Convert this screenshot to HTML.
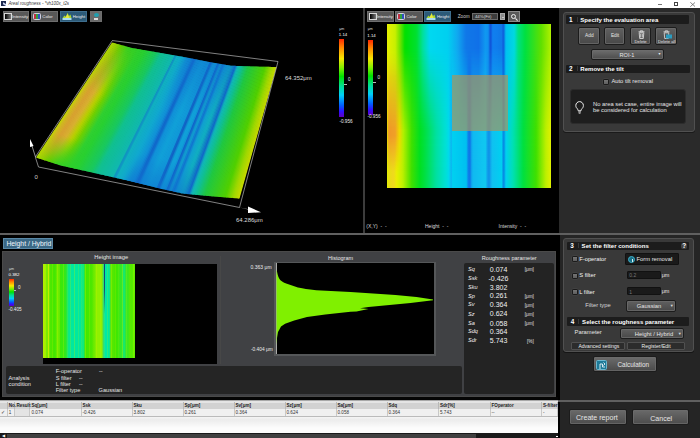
<!DOCTYPE html>
<html><head><meta charset="utf-8">
<style>
*{margin:0;padding:0;box-sizing:border-box}
html,body{width:700px;height:438px;overflow:hidden;background:#000}
body{position:relative;font-family:"Liberation Sans",sans-serif;color:#e8e8e8}
.a{position:absolute}
.t{position:absolute;white-space:nowrap;line-height:1}
.btn{position:absolute;background:linear-gradient(#6a6a6a,#505050);border:1px solid #7a7a7a;border-radius:1px}
.tb{position:absolute;top:10.5px;height:11.5px;background:#585858;border:0.8px solid #6e6e6e}
.tb.sel{background:#2c5a78;border-color:#3e6e8e}
.tbt{position:absolute;top:3.4px;font-size:4.3px;color:#f0f0f0;line-height:1;white-space:nowrap}
.hdr{position:absolute;height:8.4px;background:#1c1c1c;border-radius:1px}
.hdr:after{content:"";position:absolute;left:11px;top:1.5px;width:0.6px;height:5px;background:#3a3a3a}
.hdr .n{position:absolute;left:3.4px;top:1.6px;font-size:6.4px;font-weight:bold;color:#fff;line-height:1}
.hdr .s{position:absolute;left:14.8px;top:1.3px;font-size:6.05px;font-weight:bold;color:#fff;line-height:1;white-space:nowrap}
.rbtn{position:absolute;background:linear-gradient(#606060,#484848);border:1px solid #1c1c1c;border-radius:2px;box-shadow:inset 0 0 0 0.8px #6c6c6c}
.lbl{position:absolute;font-size:5.5px;color:#e6e6e6;white-space:nowrap;line-height:1}
.cb{position:absolute;width:6.2px;height:6px;background:linear-gradient(#747474,#5e5e5e);border:0.9px solid #1a1a1a;border-radius:1.2px;box-shadow:0 0 0 0.5px #4a4a4a}
.inp{position:absolute;background:#1a1a1a;border:1px solid #111;border-radius:1px}
.th{position:absolute;top:0;height:6.7px;font-size:4.6px;font-weight:bold;color:#222;line-height:7px;white-space:nowrap;padding-left:1px;border-right:1px solid #b8b8b8}
.td{position:absolute;top:0;height:7px;font-size:4.6px;color:#333;line-height:7px;white-space:nowrap;padding-left:1px;border-right:1px solid #c8c8c8}
.rp{position:absolute;font-size:7px;color:#f0f0f0;white-space:nowrap;line-height:1}
.rn{position:absolute;font-size:5.6px;font-style:italic;color:#f0f0f0;white-space:nowrap;line-height:1}
.ru{position:absolute;font-size:4.7px;color:#e0e0e0;white-space:nowrap;line-height:1}
</style></head><body>

<!-- title bar -->
<div class="a" style="left:0;top:0;width:700px;height:8.3px;background:#fff"></div>
<div class="a" style="left:1.3px;top:1.3px;width:4.6px;height:5px;background:#1e2a50"></div>
<div class="a" style="left:2.5px;top:2.5px;width:2.5px;height:2px;background:#d0d8f0;transform:skewY(30deg)"></div>
<div class="t" style="left:8.4px;top:2.2px;font-size:4.45px;color:#3a3a3a;font-style:italic">Areal roughness - *vh100x_t2s</div>
<div class="a" style="left:657.6px;top:3.8px;width:4.3px;height:0.7px;background:#777"></div>
<div class="a" style="left:674px;top:2.3px;width:3.8px;height:3.4px;border:0.8px solid #444;border-top-width:1.2px"></div>
<svg class="a" style="left:689.8px;top:1.8px" width="5.5" height="5" viewBox="0 0 5.5 5"><path d="M0.3 0.3 L5.2 4.7 M5.2 0.3 L0.3 4.7" stroke="#555" stroke-width="0.7"/></svg>

<!-- left 3d toolbar -->
<div class="tb" style="left:2.6px;width:26.5px"><div class="a" style="left:0.8px;top:1.2px;width:8px;height:7.5px;border:0.8px solid #d8d8d8;background:linear-gradient(to right,#000,#7a7a7a)"></div><div class="tbt" style="left:8.5px">Intensity</div></div>
<div class="tb" style="left:30.8px;width:27.5px"><div class="a" style="left:1.3px;top:1.2px;width:8px;height:7.5px;border:0.8px solid #d0d0e0;border-radius:1.5px;background:linear-gradient(to right,#c03040 0,#c03040 33%,#30a040 33%,#30a040 66%,#3050c0 66%)"></div><div class="tbt" style="left:10.5px">Color</div></div>
<div class="tb sel" style="left:59.7px;width:27.4px"><svg class="a" style="left:1px;top:0.8px" width="10" height="8.5" viewBox="0 0 10 8.5"><path d="M0.5 6 L2.5 3.5 L4 5 L5.5 0.8 L7 4 L8.5 2.5 L9.5 6 Z" fill="#a8d830"/><path d="M3 6 L5.5 2 L7.5 6 Z" fill="#e8e840"/><rect x="0.5" y="6" width="9" height="2" fill="#a8dcf0"/></svg><div class="tbt" style="left:12px">Height</div></div>
<div class="tb" style="left:89.7px;width:12px;background:#6a6a6a"><div class="a" style="left:3px;top:1px;width:5px;height:4px;border-radius:50%;background:#20a0b0"></div><div class="a" style="left:3.5px;top:6px;width:4px;height:2px;background:#ddd"></div></div>

<!-- 3d view -->
<svg class="a" style="left:0;top:0" width="362" height="233" viewBox="0 0 362 233">
<defs><linearGradient id="g0" gradientUnits="userSpaceOnUse" x1="112.5" y1="42.7" x2="36.7" y2="157.7"><stop offset="0" stop-color="#acd700"/><stop offset=".4" stop-color="#c4d107"/><stop offset=".78" stop-color="#c4d107"/><stop offset="1" stop-color="#acd700"/></linearGradient><linearGradient id="g1" gradientUnits="userSpaceOnUse" x1="113.6" y1="43.0" x2="38.0" y2="158.2"><stop offset="0" stop-color="#a5d500"/><stop offset=".4" stop-color="#cbc315"/><stop offset=".78" stop-color="#cbc315"/><stop offset="1" stop-color="#a5d500"/></linearGradient><linearGradient id="g2" gradientUnits="userSpaceOnUse" x1="114.7" y1="43.3" x2="39.4" y2="158.6"><stop offset="0" stop-color="#9ed400"/><stop offset=".4" stop-color="#d1b621"/><stop offset=".78" stop-color="#d1b621"/><stop offset="1" stop-color="#9ed400"/></linearGradient><linearGradient id="g3" gradientUnits="userSpaceOnUse" x1="115.8" y1="43.6" x2="40.7" y2="159.0"><stop offset="0" stop-color="#97d200"/><stop offset=".4" stop-color="#d3b025"/><stop offset=".78" stop-color="#d3b025"/><stop offset="1" stop-color="#97d200"/></linearGradient><linearGradient id="g4" gradientUnits="userSpaceOnUse" x1="116.9" y1="43.9" x2="42.1" y2="159.5"><stop offset="0" stop-color="#90d000"/><stop offset=".4" stop-color="#d5aa2a"/><stop offset=".78" stop-color="#d5aa2a"/><stop offset="1" stop-color="#90d000"/></linearGradient><linearGradient id="g5" gradientUnits="userSpaceOnUse" x1="118.0" y1="44.2" x2="43.5" y2="159.9"><stop offset="0" stop-color="#85d000"/><stop offset=".4" stop-color="#d7a32e"/><stop offset=".78" stop-color="#d7a32e"/><stop offset="1" stop-color="#85d000"/></linearGradient><linearGradient id="g6" gradientUnits="userSpaceOnUse" x1="119.1" y1="44.5" x2="44.8" y2="160.4"><stop offset="0" stop-color="#7bd000"/><stop offset=".4" stop-color="#d8a230"/><stop offset=".78" stop-color="#d8a230"/><stop offset="1" stop-color="#7bd000"/></linearGradient><linearGradient id="g7" gradientUnits="userSpaceOnUse" x1="120.2" y1="44.8" x2="46.2" y2="160.8"><stop offset="0" stop-color="#70d000"/><stop offset=".4" stop-color="#d8a530"/><stop offset=".78" stop-color="#d8a530"/><stop offset="1" stop-color="#70d000"/></linearGradient><linearGradient id="g8" gradientUnits="userSpaceOnUse" x1="121.3" y1="45.1" x2="47.5" y2="161.2"><stop offset="0" stop-color="#65d000"/><stop offset=".4" stop-color="#d8a930"/><stop offset=".78" stop-color="#d8a930"/><stop offset="1" stop-color="#65d000"/></linearGradient><linearGradient id="g9" gradientUnits="userSpaceOnUse" x1="122.4" y1="45.4" x2="48.9" y2="161.7"><stop offset="0" stop-color="#5dd003"/><stop offset=".4" stop-color="#d8ac30"/><stop offset=".78" stop-color="#d8ac30"/><stop offset="1" stop-color="#5dd003"/></linearGradient><linearGradient id="g10" gradientUnits="userSpaceOnUse" x1="123.5" y1="45.7" x2="50.2" y2="162.1"><stop offset="0" stop-color="#56d008"/><stop offset=".4" stop-color="#d8b030"/><stop offset=".78" stop-color="#d8b030"/><stop offset="1" stop-color="#56d008"/></linearGradient><linearGradient id="g11" gradientUnits="userSpaceOnUse" x1="124.6" y1="46.0" x2="51.6" y2="162.6"><stop offset="0" stop-color="#4fd00d"/><stop offset=".4" stop-color="#d1b725"/><stop offset=".78" stop-color="#d1b725"/><stop offset="1" stop-color="#4fd00d"/></linearGradient><linearGradient id="g12" gradientUnits="userSpaceOnUse" x1="125.7" y1="46.3" x2="53.0" y2="163.0"><stop offset="0" stop-color="#49d013"/><stop offset=".4" stop-color="#cabe1b"/><stop offset=".78" stop-color="#cabe1b"/><stop offset="1" stop-color="#49d013"/></linearGradient><linearGradient id="g13" gradientUnits="userSpaceOnUse" x1="126.8" y1="46.6" x2="54.3" y2="163.4"><stop offset="0" stop-color="#42d018"/><stop offset=".4" stop-color="#c3c510"/><stop offset=".78" stop-color="#c3c510"/><stop offset="1" stop-color="#42d018"/></linearGradient><linearGradient id="g14" gradientUnits="userSpaceOnUse" x1="127.9" y1="46.9" x2="55.7" y2="163.9"><stop offset="0" stop-color="#3bd01d"/><stop offset=".4" stop-color="#bccc05"/><stop offset=".78" stop-color="#bccc05"/><stop offset="1" stop-color="#3bd01d"/></linearGradient><linearGradient id="g15" gradientUnits="userSpaceOnUse" x1="129.0" y1="47.2" x2="57.0" y2="164.3"><stop offset="0" stop-color="#37d021"/><stop offset=".4" stop-color="#b0d000"/><stop offset=".78" stop-color="#b0d000"/><stop offset="1" stop-color="#37d021"/></linearGradient><linearGradient id="g16" gradientUnits="userSpaceOnUse" x1="130.1" y1="47.5" x2="58.4" y2="164.8"><stop offset="0" stop-color="#36d022"/><stop offset=".4" stop-color="#a0d000"/><stop offset=".78" stop-color="#a0d000"/><stop offset="1" stop-color="#36d022"/></linearGradient><linearGradient id="g17" gradientUnits="userSpaceOnUse" x1="131.2" y1="47.8" x2="59.7" y2="165.2"><stop offset="0" stop-color="#35d023"/><stop offset=".4" stop-color="#90d000"/><stop offset=".78" stop-color="#90d000"/><stop offset="1" stop-color="#35d023"/></linearGradient><linearGradient id="g18" gradientUnits="userSpaceOnUse" x1="132.3" y1="48.1" x2="61.1" y2="165.6"><stop offset="0" stop-color="#34d024"/><stop offset=".4" stop-color="#80d000"/><stop offset=".78" stop-color="#80d000"/><stop offset="1" stop-color="#34d024"/></linearGradient><linearGradient id="g19" gradientUnits="userSpaceOnUse" x1="133.4" y1="48.3" x2="62.5" y2="165.9"><stop offset="0" stop-color="#33d025"/><stop offset=".4" stop-color="#70d000"/><stop offset=".78" stop-color="#70d000"/><stop offset="1" stop-color="#33d025"/></linearGradient><linearGradient id="g20" gradientUnits="userSpaceOnUse" x1="134.5" y1="48.5" x2="63.8" y2="166.2"><stop offset="0" stop-color="#32d026"/><stop offset=".4" stop-color="#65d008"/><stop offset=".78" stop-color="#65d008"/><stop offset="1" stop-color="#32d026"/></linearGradient><linearGradient id="g21" gradientUnits="userSpaceOnUse" x1="135.6" y1="48.6" x2="65.2" y2="166.5"><stop offset="0" stop-color="#31d027"/><stop offset=".4" stop-color="#5bd010"/><stop offset=".78" stop-color="#5bd010"/><stop offset="1" stop-color="#31d027"/></linearGradient><linearGradient id="g22" gradientUnits="userSpaceOnUse" x1="136.7" y1="48.8" x2="66.5" y2="166.8"><stop offset="0" stop-color="#30d028"/><stop offset=".4" stop-color="#50d018"/><stop offset=".78" stop-color="#50d018"/><stop offset="1" stop-color="#30d028"/></linearGradient><linearGradient id="g23" gradientUnits="userSpaceOnUse" x1="137.8" y1="49.0" x2="67.9" y2="167.1"><stop offset="0" stop-color="#2fd029"/><stop offset=".4" stop-color="#45d020"/><stop offset=".78" stop-color="#45d020"/><stop offset="1" stop-color="#2fd029"/></linearGradient><linearGradient id="g24" gradientUnits="userSpaceOnUse" x1="138.9" y1="49.2" x2="69.2" y2="167.4"><stop offset="0" stop-color="#2ed02a"/><stop offset=".4" stop-color="#3bd028"/><stop offset=".78" stop-color="#3bd028"/><stop offset="1" stop-color="#2ed02a"/></linearGradient><linearGradient id="g25" gradientUnits="userSpaceOnUse" x1="140.0" y1="49.4" x2="70.6" y2="167.7"><stop offset="0" stop-color="#2dd02b"/><stop offset=".4" stop-color="#30d030"/><stop offset=".78" stop-color="#30d030"/><stop offset="1" stop-color="#2dd02b"/></linearGradient><linearGradient id="g26" gradientUnits="userSpaceOnUse" x1="141.1" y1="49.6" x2="72.0" y2="168.0"><stop offset="0" stop-color="#2cd02c"/><stop offset=".4" stop-color="#2ed030"/><stop offset=".78" stop-color="#2ed030"/><stop offset="1" stop-color="#2cd02c"/></linearGradient><linearGradient id="g27" gradientUnits="userSpaceOnUse" x1="142.2" y1="49.8" x2="73.3" y2="168.3"><stop offset="0" stop-color="#2bd02d"/><stop offset=".4" stop-color="#2cd030"/><stop offset=".78" stop-color="#2cd030"/><stop offset="1" stop-color="#2bd02d"/></linearGradient><linearGradient id="g28" gradientUnits="userSpaceOnUse" x1="143.3" y1="50.0" x2="74.7" y2="168.6"><stop offset="0" stop-color="#2ad02e"/><stop offset=".4" stop-color="#2bd030"/><stop offset=".78" stop-color="#2bd030"/><stop offset="1" stop-color="#2ad02e"/></linearGradient><linearGradient id="g29" gradientUnits="userSpaceOnUse" x1="144.4" y1="50.2" x2="76.0" y2="168.9"><stop offset="0" stop-color="#29d02f"/><stop offset=".4" stop-color="#29d030"/><stop offset=".78" stop-color="#29d030"/><stop offset="1" stop-color="#29d02f"/></linearGradient><linearGradient id="g30" gradientUnits="userSpaceOnUse" x1="145.4" y1="50.3" x2="77.4" y2="169.2"><stop offset="0" stop-color="#27d032"/><stop offset=".4" stop-color="#27d032"/><stop offset=".78" stop-color="#27d032"/><stop offset="1" stop-color="#27d032"/></linearGradient><linearGradient id="g31" gradientUnits="userSpaceOnUse" x1="146.5" y1="50.5" x2="78.7" y2="169.5"><stop offset="0" stop-color="#26cf37"/><stop offset=".4" stop-color="#26cf37"/><stop offset=".78" stop-color="#26cf37"/><stop offset="1" stop-color="#26cf37"/></linearGradient><linearGradient id="g32" gradientUnits="userSpaceOnUse" x1="147.6" y1="50.7" x2="80.1" y2="169.8"><stop offset="0" stop-color="#24ce3b"/><stop offset=".4" stop-color="#24ce3b"/><stop offset=".78" stop-color="#24ce3b"/><stop offset="1" stop-color="#24ce3b"/></linearGradient><linearGradient id="g33" gradientUnits="userSpaceOnUse" x1="148.7" y1="50.9" x2="81.4" y2="170.1"><stop offset="0" stop-color="#23cd40"/><stop offset=".4" stop-color="#23cd40"/><stop offset=".78" stop-color="#23cd40"/><stop offset="1" stop-color="#23cd40"/></linearGradient><linearGradient id="g34" gradientUnits="userSpaceOnUse" x1="149.8" y1="51.1" x2="82.8" y2="170.4"><stop offset="0" stop-color="#21cd45"/><stop offset=".4" stop-color="#21cd45"/><stop offset=".78" stop-color="#21cd45"/><stop offset="1" stop-color="#21cd45"/></linearGradient><linearGradient id="g35" gradientUnits="userSpaceOnUse" x1="150.9" y1="51.3" x2="84.2" y2="170.7"><stop offset="0" stop-color="#20cc49"/><stop offset=".4" stop-color="#20cc49"/><stop offset=".78" stop-color="#20cc49"/><stop offset="1" stop-color="#20cc49"/></linearGradient><linearGradient id="g36" gradientUnits="userSpaceOnUse" x1="152.0" y1="51.5" x2="85.5" y2="171.0"><stop offset="0" stop-color="#1ecb4e"/><stop offset=".4" stop-color="#1ecb4e"/><stop offset=".78" stop-color="#1ecb4e"/><stop offset="1" stop-color="#1ecb4e"/></linearGradient><linearGradient id="g37" gradientUnits="userSpaceOnUse" x1="153.1" y1="51.7" x2="86.9" y2="171.3"><stop offset="0" stop-color="#1dca52"/><stop offset=".4" stop-color="#1dca52"/><stop offset=".78" stop-color="#1dca52"/><stop offset="1" stop-color="#1dca52"/></linearGradient><linearGradient id="g38" gradientUnits="userSpaceOnUse" x1="154.2" y1="51.9" x2="88.2" y2="171.6"><stop offset="0" stop-color="#1bca57"/><stop offset=".4" stop-color="#1bca57"/><stop offset=".78" stop-color="#1bca57"/><stop offset="1" stop-color="#1bca57"/></linearGradient><linearGradient id="g39" gradientUnits="userSpaceOnUse" x1="155.3" y1="52.0" x2="89.6" y2="171.9"><stop offset="0" stop-color="#1ac95b"/><stop offset=".4" stop-color="#1ac95b"/><stop offset=".78" stop-color="#1ac95b"/><stop offset="1" stop-color="#1ac95b"/></linearGradient><linearGradient id="g40" gradientUnits="userSpaceOnUse" x1="156.4" y1="52.2" x2="90.9" y2="172.2"><stop offset="0" stop-color="#18c860"/><stop offset=".4" stop-color="#18c860"/><stop offset=".78" stop-color="#18c860"/><stop offset="1" stop-color="#18c860"/></linearGradient><linearGradient id="g41" gradientUnits="userSpaceOnUse" x1="157.5" y1="52.4" x2="92.3" y2="172.5"><stop offset="0" stop-color="#16c66b"/><stop offset=".4" stop-color="#16c66b"/><stop offset=".78" stop-color="#16c66b"/><stop offset="1" stop-color="#16c66b"/></linearGradient><linearGradient id="g42" gradientUnits="userSpaceOnUse" x1="158.6" y1="52.6" x2="93.7" y2="172.8"><stop offset="0" stop-color="#14c475"/><stop offset=".4" stop-color="#14c475"/><stop offset=".78" stop-color="#14c475"/><stop offset="1" stop-color="#14c475"/></linearGradient><linearGradient id="g43" gradientUnits="userSpaceOnUse" x1="159.7" y1="52.8" x2="95.0" y2="173.1"><stop offset="0" stop-color="#13c380"/><stop offset=".4" stop-color="#13c380"/><stop offset=".78" stop-color="#13c380"/><stop offset="1" stop-color="#13c380"/></linearGradient><linearGradient id="g44" gradientUnits="userSpaceOnUse" x1="160.8" y1="53.0" x2="96.4" y2="173.4"><stop offset="0" stop-color="#11c18b"/><stop offset=".4" stop-color="#11c18b"/><stop offset=".78" stop-color="#11c18b"/><stop offset="1" stop-color="#11c18b"/></linearGradient><linearGradient id="g45" gradientUnits="userSpaceOnUse" x1="161.9" y1="53.2" x2="97.7" y2="173.8"><stop offset="0" stop-color="#10c091"/><stop offset=".4" stop-color="#10c091"/><stop offset=".78" stop-color="#10c091"/><stop offset="1" stop-color="#10c091"/></linearGradient><linearGradient id="g46" gradientUnits="userSpaceOnUse" x1="163.0" y1="53.4" x2="99.1" y2="174.1"><stop offset="0" stop-color="#10bf94"/><stop offset=".4" stop-color="#10bf94"/><stop offset=".78" stop-color="#10bf94"/><stop offset="1" stop-color="#10bf94"/></linearGradient><linearGradient id="g47" gradientUnits="userSpaceOnUse" x1="164.1" y1="53.6" x2="100.4" y2="174.4"><stop offset="0" stop-color="#10be97"/><stop offset=".4" stop-color="#10be97"/><stop offset=".78" stop-color="#10be97"/><stop offset="1" stop-color="#10be97"/></linearGradient><linearGradient id="g48" gradientUnits="userSpaceOnUse" x1="165.2" y1="53.8" x2="101.8" y2="174.7"><stop offset="0" stop-color="#10be99"/><stop offset=".4" stop-color="#10be99"/><stop offset=".78" stop-color="#10be99"/><stop offset="1" stop-color="#10be99"/></linearGradient><linearGradient id="g49" gradientUnits="userSpaceOnUse" x1="166.3" y1="54.0" x2="103.2" y2="175.0"><stop offset="0" stop-color="#10bd9c"/><stop offset=".4" stop-color="#10bd9c"/><stop offset=".78" stop-color="#10bd9c"/><stop offset="1" stop-color="#10bd9c"/></linearGradient><linearGradient id="g50" gradientUnits="userSpaceOnUse" x1="167.4" y1="54.1" x2="104.5" y2="175.3"><stop offset="0" stop-color="#10bc9f"/><stop offset=".4" stop-color="#10bc9f"/><stop offset=".78" stop-color="#10bc9f"/><stop offset="1" stop-color="#10bc9f"/></linearGradient><linearGradient id="g51" gradientUnits="userSpaceOnUse" x1="168.5" y1="54.3" x2="105.9" y2="175.6"><stop offset="0" stop-color="#10bca1"/><stop offset=".4" stop-color="#10bca1"/><stop offset=".78" stop-color="#10bca1"/><stop offset="1" stop-color="#10bca1"/></linearGradient><linearGradient id="g52" gradientUnits="userSpaceOnUse" x1="169.6" y1="54.5" x2="107.2" y2="175.9"><stop offset="0" stop-color="#10bba4"/><stop offset=".4" stop-color="#10bba4"/><stop offset=".78" stop-color="#10bba4"/><stop offset="1" stop-color="#10bba4"/></linearGradient><linearGradient id="g53" gradientUnits="userSpaceOnUse" x1="170.7" y1="54.7" x2="108.6" y2="176.2"><stop offset="0" stop-color="#10baa7"/><stop offset=".4" stop-color="#10baa7"/><stop offset=".78" stop-color="#10baa7"/><stop offset="1" stop-color="#10baa7"/></linearGradient><linearGradient id="g54" gradientUnits="userSpaceOnUse" x1="171.8" y1="54.9" x2="109.9" y2="176.5"><stop offset="0" stop-color="#10baa9"/><stop offset=".4" stop-color="#10baa9"/><stop offset=".78" stop-color="#10baa9"/><stop offset="1" stop-color="#10baa9"/></linearGradient><linearGradient id="g55" gradientUnits="userSpaceOnUse" x1="172.9" y1="55.1" x2="111.3" y2="176.8"><stop offset="0" stop-color="#10b9ac"/><stop offset=".4" stop-color="#10b9ac"/><stop offset=".78" stop-color="#10b9ac"/><stop offset="1" stop-color="#10b9ac"/></linearGradient><linearGradient id="g56" gradientUnits="userSpaceOnUse" x1="174.0" y1="55.3" x2="112.7" y2="177.2"><stop offset="0" stop-color="#10b8af"/><stop offset=".4" stop-color="#10b8af"/><stop offset=".78" stop-color="#10b8af"/><stop offset="1" stop-color="#10b8af"/></linearGradient><linearGradient id="g57" gradientUnits="userSpaceOnUse" x1="175.1" y1="55.5" x2="114.0" y2="177.5"><stop offset="0" stop-color="#1093c0"/><stop offset=".4" stop-color="#1093c0"/><stop offset=".78" stop-color="#1093c0"/><stop offset="1" stop-color="#1093c0"/></linearGradient><linearGradient id="g58" gradientUnits="userSpaceOnUse" x1="176.2" y1="55.7" x2="115.4" y2="177.8"><stop offset="0" stop-color="#1098c4"/><stop offset=".4" stop-color="#1098c4"/><stop offset=".78" stop-color="#1098c4"/><stop offset="1" stop-color="#1098c4"/></linearGradient><linearGradient id="g59" gradientUnits="userSpaceOnUse" x1="177.3" y1="55.9" x2="116.7" y2="178.1"><stop offset="0" stop-color="#10b0c1"/><stop offset=".4" stop-color="#10b0c1"/><stop offset=".78" stop-color="#10b0c1"/><stop offset="1" stop-color="#10b0c1"/></linearGradient><linearGradient id="g60" gradientUnits="userSpaceOnUse" x1="178.3" y1="56.1" x2="118.1" y2="178.4"><stop offset="0" stop-color="#10afc3"/><stop offset=".4" stop-color="#10afc3"/><stop offset=".78" stop-color="#10afc3"/><stop offset="1" stop-color="#10afc3"/></linearGradient><linearGradient id="g61" gradientUnits="userSpaceOnUse" x1="179.4" y1="56.3" x2="119.4" y2="178.7"><stop offset="0" stop-color="#10adc5"/><stop offset=".4" stop-color="#10adc5"/><stop offset=".78" stop-color="#10adc5"/><stop offset="1" stop-color="#10adc5"/></linearGradient><linearGradient id="g62" gradientUnits="userSpaceOnUse" x1="180.5" y1="56.5" x2="120.8" y2="179.0"><stop offset="0" stop-color="#10acc8"/><stop offset=".4" stop-color="#10acc8"/><stop offset=".78" stop-color="#10acc8"/><stop offset="1" stop-color="#10acc8"/></linearGradient><linearGradient id="g63" gradientUnits="userSpaceOnUse" x1="181.6" y1="56.7" x2="122.1" y2="179.3"><stop offset="0" stop-color="#10a9ca"/><stop offset=".4" stop-color="#10abca"/><stop offset=".78" stop-color="#10abca"/><stop offset="1" stop-color="#10a9ca"/></linearGradient><linearGradient id="g64" gradientUnits="userSpaceOnUse" x1="182.7" y1="56.9" x2="123.5" y2="179.6"><stop offset="0" stop-color="#10a3cd"/><stop offset=".4" stop-color="#10aacc"/><stop offset=".78" stop-color="#10aacc"/><stop offset="1" stop-color="#10a3cd"/></linearGradient><linearGradient id="g65" gradientUnits="userSpaceOnUse" x1="183.8" y1="57.0" x2="124.9" y2="179.9"><stop offset="0" stop-color="#109ecf"/><stop offset=".4" stop-color="#10a9cf"/><stop offset=".78" stop-color="#10a9cf"/><stop offset="1" stop-color="#109dcf"/></linearGradient><linearGradient id="g66" gradientUnits="userSpaceOnUse" x1="184.9" y1="57.2" x2="126.2" y2="180.2"><stop offset="0" stop-color="#1098d0"/><stop offset=".4" stop-color="#10a6d1"/><stop offset=".78" stop-color="#10a6d1"/><stop offset="1" stop-color="#1096d0"/></linearGradient><linearGradient id="g67" gradientUnits="userSpaceOnUse" x1="186.0" y1="57.4" x2="127.6" y2="180.5"><stop offset="0" stop-color="#1091d1"/><stop offset=".4" stop-color="#10a2d2"/><stop offset=".78" stop-color="#10a2d2"/><stop offset="1" stop-color="#108fd1"/></linearGradient><linearGradient id="g68" gradientUnits="userSpaceOnUse" x1="187.1" y1="57.7" x2="128.9" y2="180.9"><stop offset="0" stop-color="#108bd2"/><stop offset=".4" stop-color="#109ed3"/><stop offset=".78" stop-color="#109ed3"/><stop offset="1" stop-color="#1089d2"/></linearGradient><linearGradient id="g69" gradientUnits="userSpaceOnUse" x1="188.2" y1="57.9" x2="130.3" y2="181.2"><stop offset="0" stop-color="#1087d3"/><stop offset=".4" stop-color="#109ad5"/><stop offset=".78" stop-color="#109ad5"/><stop offset="1" stop-color="#1085d2"/></linearGradient><linearGradient id="g70" gradientUnits="userSpaceOnUse" x1="189.3" y1="58.1" x2="131.6" y2="181.6"><stop offset="0" stop-color="#1085d3"/><stop offset=".4" stop-color="#1096d6"/><stop offset=".78" stop-color="#1096d6"/><stop offset="1" stop-color="#1083d3"/></linearGradient><linearGradient id="g71" gradientUnits="userSpaceOnUse" x1="190.4" y1="58.3" x2="133.0" y2="181.9"><stop offset="0" stop-color="#1083d4"/><stop offset=".4" stop-color="#1092d7"/><stop offset=".78" stop-color="#1092d7"/><stop offset="1" stop-color="#1081d4"/></linearGradient><linearGradient id="g72" gradientUnits="userSpaceOnUse" x1="191.5" y1="58.5" x2="134.4" y2="182.2"><stop offset="0" stop-color="#107dd3"/><stop offset=".4" stop-color="#1088d5"/><stop offset=".78" stop-color="#1088d5"/><stop offset="1" stop-color="#107cd3"/></linearGradient><linearGradient id="g73" gradientUnits="userSpaceOnUse" x1="192.6" y1="58.7" x2="135.7" y2="182.6"><stop offset="0" stop-color="#1074d0"/><stop offset=".4" stop-color="#1078d0"/><stop offset=".78" stop-color="#1078d0"/><stop offset="1" stop-color="#1074d0"/></linearGradient><linearGradient id="g74" gradientUnits="userSpaceOnUse" x1="193.7" y1="58.9" x2="137.1" y2="182.9"><stop offset="0" stop-color="#106ccd"/><stop offset=".4" stop-color="#1068cb"/><stop offset=".78" stop-color="#1068cb"/><stop offset="1" stop-color="#106ccd"/></linearGradient><linearGradient id="g75" gradientUnits="userSpaceOnUse" x1="194.8" y1="59.2" x2="138.4" y2="183.2"><stop offset="0" stop-color="#106dce"/><stop offset=".4" stop-color="#106bcc"/><stop offset=".78" stop-color="#106bcc"/><stop offset="1" stop-color="#106dce"/></linearGradient><linearGradient id="g76" gradientUnits="userSpaceOnUse" x1="195.9" y1="59.4" x2="139.8" y2="183.6"><stop offset="0" stop-color="#1079d1"/><stop offset=".4" stop-color="#1080d3"/><stop offset=".78" stop-color="#1080d3"/><stop offset="1" stop-color="#1078d1"/></linearGradient><linearGradient id="g77" gradientUnits="userSpaceOnUse" x1="197.0" y1="59.6" x2="141.1" y2="183.9"><stop offset="0" stop-color="#1082d4"/><stop offset=".4" stop-color="#1091d8"/><stop offset=".78" stop-color="#1091d8"/><stop offset="1" stop-color="#1080d4"/></linearGradient><linearGradient id="g78" gradientUnits="userSpaceOnUse" x1="198.1" y1="59.8" x2="142.5" y2="184.2"><stop offset="0" stop-color="#1084d4"/><stop offset=".4" stop-color="#1094d8"/><stop offset=".78" stop-color="#1094d8"/><stop offset="1" stop-color="#1082d4"/></linearGradient><linearGradient id="g79" gradientUnits="userSpaceOnUse" x1="199.2" y1="60.0" x2="143.9" y2="184.6"><stop offset="0" stop-color="#1085d4"/><stop offset=".4" stop-color="#1097d8"/><stop offset=".78" stop-color="#1097d8"/><stop offset="1" stop-color="#1083d4"/></linearGradient><linearGradient id="g80" gradientUnits="userSpaceOnUse" x1="200.3" y1="60.2" x2="145.2" y2="184.9"><stop offset="0" stop-color="#1087d4"/><stop offset=".4" stop-color="#109ad8"/><stop offset=".78" stop-color="#109ad8"/><stop offset="1" stop-color="#1085d4"/></linearGradient><linearGradient id="g81" gradientUnits="userSpaceOnUse" x1="201.4" y1="60.5" x2="146.6" y2="185.2"><stop offset="0" stop-color="#1089d4"/><stop offset=".4" stop-color="#109dd8"/><stop offset=".78" stop-color="#109dd8"/><stop offset="1" stop-color="#1086d4"/></linearGradient><linearGradient id="g82" gradientUnits="userSpaceOnUse" x1="202.5" y1="60.7" x2="147.9" y2="185.6"><stop offset="0" stop-color="#108ad4"/><stop offset=".4" stop-color="#10a0d8"/><stop offset=".78" stop-color="#10a0d8"/><stop offset="1" stop-color="#1088d4"/></linearGradient><linearGradient id="g83" gradientUnits="userSpaceOnUse" x1="203.6" y1="60.9" x2="149.3" y2="185.9"><stop offset="0" stop-color="#108ad4"/><stop offset=".4" stop-color="#109fd8"/><stop offset=".78" stop-color="#109fd8"/><stop offset="1" stop-color="#1087d4"/></linearGradient><linearGradient id="g84" gradientUnits="userSpaceOnUse" x1="204.7" y1="61.1" x2="150.6" y2="186.3"><stop offset="0" stop-color="#1089d4"/><stop offset=".4" stop-color="#109dd8"/><stop offset=".78" stop-color="#109dd8"/><stop offset="1" stop-color="#1087d4"/></linearGradient><linearGradient id="g85" gradientUnits="userSpaceOnUse" x1="205.8" y1="61.3" x2="152.0" y2="186.6"><stop offset="0" stop-color="#1088d4"/><stop offset=".4" stop-color="#109cd8"/><stop offset=".78" stop-color="#109cd8"/><stop offset="1" stop-color="#1086d4"/></linearGradient><linearGradient id="g86" gradientUnits="userSpaceOnUse" x1="206.9" y1="61.5" x2="153.4" y2="186.9"><stop offset="0" stop-color="#1087d4"/><stop offset=".4" stop-color="#109bd8"/><stop offset=".78" stop-color="#109bd8"/><stop offset="1" stop-color="#1085d4"/></linearGradient><linearGradient id="g87" gradientUnits="userSpaceOnUse" x1="208.0" y1="61.8" x2="154.7" y2="187.3"><stop offset="0" stop-color="#1087d4"/><stop offset=".4" stop-color="#1099d8"/><stop offset=".78" stop-color="#1099d8"/><stop offset="1" stop-color="#1085d4"/></linearGradient><linearGradient id="g88" gradientUnits="userSpaceOnUse" x1="209.1" y1="62.0" x2="156.1" y2="187.6"><stop offset="0" stop-color="#1086d4"/><stop offset=".4" stop-color="#1098d8"/><stop offset=".78" stop-color="#1098d8"/><stop offset="1" stop-color="#1084d4"/></linearGradient><linearGradient id="g89" gradientUnits="userSpaceOnUse" x1="210.2" y1="62.2" x2="157.4" y2="187.9"><stop offset="0" stop-color="#106ccc"/><stop offset=".4" stop-color="#1068c8"/><stop offset=".78" stop-color="#1068c8"/><stop offset="1" stop-color="#106ccc"/></linearGradient><linearGradient id="g90" gradientUnits="userSpaceOnUse" x1="211.2" y1="62.4" x2="158.8" y2="188.3"><stop offset="0" stop-color="#1068ca"/><stop offset=".4" stop-color="#1062c5"/><stop offset=".78" stop-color="#1062c5"/><stop offset="1" stop-color="#1069cb"/></linearGradient><linearGradient id="g91" gradientUnits="userSpaceOnUse" x1="212.3" y1="62.6" x2="160.1" y2="188.6"><stop offset="0" stop-color="#107cd0"/><stop offset=".4" stop-color="#1085d0"/><stop offset=".78" stop-color="#1085d0"/><stop offset="1" stop-color="#107bd0"/></linearGradient><linearGradient id="g92" gradientUnits="userSpaceOnUse" x1="213.4" y1="62.8" x2="161.5" y2="188.9"><stop offset="0" stop-color="#108ad4"/><stop offset=".4" stop-color="#10a0d8"/><stop offset=".78" stop-color="#10a0d8"/><stop offset="1" stop-color="#1088d4"/></linearGradient><linearGradient id="g93" gradientUnits="userSpaceOnUse" x1="214.5" y1="63.0" x2="162.8" y2="189.2"><stop offset="0" stop-color="#108ad4"/><stop offset=".4" stop-color="#10a0d8"/><stop offset=".78" stop-color="#10a0d8"/><stop offset="1" stop-color="#1088d4"/></linearGradient><linearGradient id="g94" gradientUnits="userSpaceOnUse" x1="215.6" y1="63.1" x2="164.2" y2="189.5"><stop offset="0" stop-color="#108ad4"/><stop offset=".4" stop-color="#10a0d8"/><stop offset=".78" stop-color="#10a0d8"/><stop offset="1" stop-color="#1088d4"/></linearGradient><linearGradient id="g95" gradientUnits="userSpaceOnUse" x1="216.7" y1="63.3" x2="165.6" y2="189.8"><stop offset="0" stop-color="#1084d3"/><stop offset=".4" stop-color="#1094d5"/><stop offset=".78" stop-color="#1094d5"/><stop offset="1" stop-color="#1082d3"/></linearGradient><linearGradient id="g96" gradientUnits="userSpaceOnUse" x1="217.8" y1="63.5" x2="166.9" y2="190.1"><stop offset="0" stop-color="#1069cd"/><stop offset=".4" stop-color="#1064cb"/><stop offset=".78" stop-color="#1064cb"/><stop offset="1" stop-color="#106acd"/></linearGradient><linearGradient id="g97" gradientUnits="userSpaceOnUse" x1="218.9" y1="63.7" x2="168.3" y2="190.4"><stop offset="0" stop-color="#1071cd"/><stop offset=".4" stop-color="#1073cb"/><stop offset=".78" stop-color="#1073cb"/><stop offset="1" stop-color="#1071cd"/></linearGradient><linearGradient id="g98" gradientUnits="userSpaceOnUse" x1="220.0" y1="63.9" x2="169.6" y2="190.7"><stop offset="0" stop-color="#1085cf"/><stop offset=".4" stop-color="#1096ce"/><stop offset=".78" stop-color="#1096ce"/><stop offset="1" stop-color="#1083cf"/></linearGradient><linearGradient id="g99" gradientUnits="userSpaceOnUse" x1="221.1" y1="64.1" x2="171.0" y2="191.0"><stop offset="0" stop-color="#1088d0"/><stop offset=".4" stop-color="#109cd0"/><stop offset=".78" stop-color="#109cd0"/><stop offset="1" stop-color="#1086d0"/></linearGradient><linearGradient id="g100" gradientUnits="userSpaceOnUse" x1="222.2" y1="64.3" x2="172.3" y2="191.3"><stop offset="0" stop-color="#107ad0"/><stop offset=".4" stop-color="#1083d0"/><stop offset=".78" stop-color="#1083d0"/><stop offset="1" stop-color="#1079d0"/></linearGradient><linearGradient id="g101" gradientUnits="userSpaceOnUse" x1="223.3" y1="64.4" x2="173.7" y2="191.6"><stop offset="0" stop-color="#1073d0"/><stop offset=".4" stop-color="#1075d0"/><stop offset=".78" stop-color="#1075d0"/><stop offset="1" stop-color="#1073d0"/></linearGradient><linearGradient id="g102" gradientUnits="userSpaceOnUse" x1="224.4" y1="64.6" x2="175.1" y2="191.9"><stop offset="0" stop-color="#107fd0"/><stop offset=".4" stop-color="#108bd0"/><stop offset=".78" stop-color="#108bd0"/><stop offset="1" stop-color="#107dd0"/></linearGradient><linearGradient id="g103" gradientUnits="userSpaceOnUse" x1="225.5" y1="64.8" x2="176.4" y2="192.2"><stop offset="0" stop-color="#108ad0"/><stop offset=".4" stop-color="#10a0d0"/><stop offset=".78" stop-color="#10a0d0"/><stop offset="1" stop-color="#1088d0"/></linearGradient><linearGradient id="g104" gradientUnits="userSpaceOnUse" x1="226.6" y1="65.0" x2="177.8" y2="192.5"><stop offset="0" stop-color="#108cce"/><stop offset=".4" stop-color="#10a4cc"/><stop offset=".78" stop-color="#10a4cc"/><stop offset="1" stop-color="#108ace"/></linearGradient><linearGradient id="g105" gradientUnits="userSpaceOnUse" x1="227.7" y1="65.2" x2="179.1" y2="192.8"><stop offset="0" stop-color="#108ecc"/><stop offset=".4" stop-color="#10a7c9"/><stop offset=".78" stop-color="#10a7c9"/><stop offset="1" stop-color="#108ccc"/></linearGradient><linearGradient id="g106" gradientUnits="userSpaceOnUse" x1="228.8" y1="65.4" x2="180.5" y2="193.1"><stop offset="0" stop-color="#1090ca"/><stop offset=".4" stop-color="#10abc5"/><stop offset=".78" stop-color="#10abc5"/><stop offset="1" stop-color="#108dcb"/></linearGradient><linearGradient id="g107" gradientUnits="userSpaceOnUse" x1="229.9" y1="65.6" x2="181.8" y2="193.4"><stop offset="0" stop-color="#1092c8"/><stop offset=".4" stop-color="#10aec2"/><stop offset=".78" stop-color="#10aec2"/><stop offset="1" stop-color="#108fc9"/></linearGradient><linearGradient id="g108" gradientUnits="userSpaceOnUse" x1="231.0" y1="65.7" x2="183.2" y2="193.6"><stop offset="0" stop-color="#1091c7"/><stop offset=".4" stop-color="#10a8c1"/><stop offset=".78" stop-color="#10a8c1"/><stop offset="1" stop-color="#108ec8"/></linearGradient><linearGradient id="g109" gradientUnits="userSpaceOnUse" x1="232.1" y1="65.7" x2="184.6" y2="193.7"><stop offset="0" stop-color="#108ac7"/><stop offset=".4" stop-color="#1098c3"/><stop offset=".78" stop-color="#1098c3"/><stop offset="1" stop-color="#1089c8"/></linearGradient><linearGradient id="g110" gradientUnits="userSpaceOnUse" x1="233.2" y1="65.8" x2="185.9" y2="193.9"><stop offset="0" stop-color="#1082c7"/><stop offset=".4" stop-color="#1088c4"/><stop offset=".78" stop-color="#1088c4"/><stop offset="1" stop-color="#1081c8"/></linearGradient><linearGradient id="g111" gradientUnits="userSpaceOnUse" x1="234.3" y1="65.8" x2="187.3" y2="194.0"><stop offset="0" stop-color="#1076c8"/><stop offset=".4" stop-color="#1078c6"/><stop offset=".78" stop-color="#1078c6"/><stop offset="1" stop-color="#1076c8"/></linearGradient><linearGradient id="g112" gradientUnits="userSpaceOnUse" x1="235.4" y1="65.9" x2="188.6" y2="194.1"><stop offset="0" stop-color="#1069c9"/><stop offset=".4" stop-color="#1068c8"/><stop offset=".78" stop-color="#1068c8"/><stop offset="1" stop-color="#1069c9"/></linearGradient><linearGradient id="g113" gradientUnits="userSpaceOnUse" x1="236.5" y1="65.9" x2="190.0" y2="194.2"><stop offset="0" stop-color="#108bc1"/><stop offset=".4" stop-color="#108cc1"/><stop offset=".78" stop-color="#108cc1"/><stop offset="1" stop-color="#108ac2"/></linearGradient><linearGradient id="g114" gradientUnits="userSpaceOnUse" x1="237.6" y1="65.9" x2="191.3" y2="194.4"><stop offset="0" stop-color="#10afba"/><stop offset=".4" stop-color="#10afba"/><stop offset=".78" stop-color="#10afba"/><stop offset="1" stop-color="#10afba"/></linearGradient><linearGradient id="g115" gradientUnits="userSpaceOnUse" x1="238.7" y1="66.0" x2="192.7" y2="194.5"><stop offset="0" stop-color="#10bab0"/><stop offset=".4" stop-color="#10bab0"/><stop offset=".78" stop-color="#10bab0"/><stop offset="1" stop-color="#10bab0"/></linearGradient><linearGradient id="g116" gradientUnits="userSpaceOnUse" x1="239.8" y1="66.0" x2="194.1" y2="194.6"><stop offset="0" stop-color="#10bca5"/><stop offset=".4" stop-color="#10bca5"/><stop offset=".78" stop-color="#10bca5"/><stop offset="1" stop-color="#10bca5"/></linearGradient><linearGradient id="g117" gradientUnits="userSpaceOnUse" x1="240.9" y1="66.1" x2="195.4" y2="194.8"><stop offset="0" stop-color="#10be9b"/><stop offset=".4" stop-color="#10be9b"/><stop offset=".78" stop-color="#10be9b"/><stop offset="1" stop-color="#10be9b"/></linearGradient><linearGradient id="g118" gradientUnits="userSpaceOnUse" x1="242.0" y1="66.1" x2="196.8" y2="194.9"><stop offset="0" stop-color="#10c090"/><stop offset=".4" stop-color="#10c090"/><stop offset=".78" stop-color="#10c090"/><stop offset="1" stop-color="#10c090"/></linearGradient><linearGradient id="g119" gradientUnits="userSpaceOnUse" x1="243.1" y1="66.2" x2="198.1" y2="195.0"><stop offset="0" stop-color="#13c183"/><stop offset=".4" stop-color="#13c183"/><stop offset=".78" stop-color="#13c183"/><stop offset="1" stop-color="#13c183"/></linearGradient><linearGradient id="g120" gradientUnits="userSpaceOnUse" x1="244.1" y1="66.2" x2="199.5" y2="195.2"><stop offset="0" stop-color="#15c375"/><stop offset=".4" stop-color="#15c375"/><stop offset=".78" stop-color="#15c375"/><stop offset="1" stop-color="#15c375"/></linearGradient><linearGradient id="g121" gradientUnits="userSpaceOnUse" x1="245.2" y1="66.3" x2="200.8" y2="195.3"><stop offset="0" stop-color="#18c468"/><stop offset=".4" stop-color="#18c468"/><stop offset=".78" stop-color="#18c468"/><stop offset="1" stop-color="#18c468"/></linearGradient><linearGradient id="g122" gradientUnits="userSpaceOnUse" x1="246.3" y1="66.3" x2="202.2" y2="195.4"><stop offset="0" stop-color="#1bc55b"/><stop offset=".4" stop-color="#1bc55b"/><stop offset=".78" stop-color="#1bc55b"/><stop offset="1" stop-color="#1bc55b"/></linearGradient><linearGradient id="g123" gradientUnits="userSpaceOnUse" x1="247.4" y1="66.3" x2="203.5" y2="195.5"><stop offset="0" stop-color="#1dc74d"/><stop offset=".4" stop-color="#1dc74d"/><stop offset=".78" stop-color="#1dc74d"/><stop offset="1" stop-color="#1dc74d"/></linearGradient><linearGradient id="g124" gradientUnits="userSpaceOnUse" x1="248.5" y1="66.3" x2="204.9" y2="195.7"><stop offset="0" stop-color="#20c840"/><stop offset=".4" stop-color="#20c840"/><stop offset=".78" stop-color="#20c840"/><stop offset="1" stop-color="#20c840"/></linearGradient><linearGradient id="g125" gradientUnits="userSpaceOnUse" x1="249.6" y1="66.4" x2="206.3" y2="195.8"><stop offset="0" stop-color="#23c93c"/><stop offset=".4" stop-color="#23c93c"/><stop offset=".78" stop-color="#23c93c"/><stop offset="1" stop-color="#23c93c"/></linearGradient><linearGradient id="g126" gradientUnits="userSpaceOnUse" x1="250.7" y1="66.4" x2="207.6" y2="195.9"><stop offset="0" stop-color="#26c937"/><stop offset=".4" stop-color="#26c937"/><stop offset=".78" stop-color="#26c937"/><stop offset="1" stop-color="#26c937"/></linearGradient><linearGradient id="g127" gradientUnits="userSpaceOnUse" x1="251.8" y1="66.4" x2="209.0" y2="196.0"><stop offset="0" stop-color="#2aca33"/><stop offset=".4" stop-color="#2aca33"/><stop offset=".78" stop-color="#2aca33"/><stop offset="1" stop-color="#2aca33"/></linearGradient><linearGradient id="g128" gradientUnits="userSpaceOnUse" x1="252.9" y1="66.5" x2="210.3" y2="196.1"><stop offset="0" stop-color="#2dca2f"/><stop offset=".4" stop-color="#2dca2f"/><stop offset=".78" stop-color="#2dca2f"/><stop offset="1" stop-color="#2dca2f"/></linearGradient><linearGradient id="g129" gradientUnits="userSpaceOnUse" x1="254.0" y1="66.5" x2="211.7" y2="196.3"><stop offset="0" stop-color="#30cb2b"/><stop offset=".4" stop-color="#30cb2b"/><stop offset=".78" stop-color="#30cb2b"/><stop offset="1" stop-color="#30cb2b"/></linearGradient><linearGradient id="g130" gradientUnits="userSpaceOnUse" x1="255.1" y1="66.5" x2="213.0" y2="196.4"><stop offset="0" stop-color="#33cb26"/><stop offset=".4" stop-color="#33cb26"/><stop offset=".78" stop-color="#33cb26"/><stop offset="1" stop-color="#33cb26"/></linearGradient><linearGradient id="g131" gradientUnits="userSpaceOnUse" x1="256.2" y1="66.6" x2="214.4" y2="196.5"><stop offset="0" stop-color="#36cc22"/><stop offset=".4" stop-color="#36cc22"/><stop offset=".78" stop-color="#36cc22"/><stop offset="1" stop-color="#36cc22"/></linearGradient><linearGradient id="g132" gradientUnits="userSpaceOnUse" x1="257.3" y1="66.6" x2="215.8" y2="196.6"><stop offset="0" stop-color="#3acc1e"/><stop offset=".4" stop-color="#3acc1e"/><stop offset=".78" stop-color="#3acc1e"/><stop offset="1" stop-color="#3acc1e"/></linearGradient><linearGradient id="g133" gradientUnits="userSpaceOnUse" x1="258.4" y1="66.6" x2="217.1" y2="196.7"><stop offset="0" stop-color="#3dcd1a"/><stop offset=".4" stop-color="#3dcd1a"/><stop offset=".78" stop-color="#3dcd1a"/><stop offset="1" stop-color="#3dcd1a"/></linearGradient><linearGradient id="g134" gradientUnits="userSpaceOnUse" x1="259.5" y1="66.7" x2="218.5" y2="196.8"><stop offset="0" stop-color="#40cd15"/><stop offset=".4" stop-color="#40cd15"/><stop offset=".78" stop-color="#40cd15"/><stop offset="1" stop-color="#40cd15"/></linearGradient><linearGradient id="g135" gradientUnits="userSpaceOnUse" x1="260.6" y1="66.7" x2="219.8" y2="197.0"><stop offset="0" stop-color="#43ce11"/><stop offset=".4" stop-color="#43ce11"/><stop offset=".78" stop-color="#43ce11"/><stop offset="1" stop-color="#43ce11"/></linearGradient><linearGradient id="g136" gradientUnits="userSpaceOnUse" x1="261.7" y1="66.7" x2="221.2" y2="197.1"><stop offset="0" stop-color="#46ce0d"/><stop offset=".4" stop-color="#46ce0d"/><stop offset=".78" stop-color="#46ce0d"/><stop offset="1" stop-color="#46ce0d"/></linearGradient><linearGradient id="g137" gradientUnits="userSpaceOnUse" x1="262.8" y1="66.7" x2="222.5" y2="197.2"><stop offset="0" stop-color="#4acf09"/><stop offset=".4" stop-color="#4acf09"/><stop offset=".78" stop-color="#4acf09"/><stop offset="1" stop-color="#4acf09"/></linearGradient><linearGradient id="g138" gradientUnits="userSpaceOnUse" x1="263.9" y1="66.8" x2="223.9" y2="197.3"><stop offset="0" stop-color="#4dcf04"/><stop offset=".4" stop-color="#4dcf04"/><stop offset=".78" stop-color="#4dcf04"/><stop offset="1" stop-color="#4dcf04"/></linearGradient><linearGradient id="g139" gradientUnits="userSpaceOnUse" x1="265.0" y1="66.8" x2="225.3" y2="197.4"><stop offset="0" stop-color="#50d000"/><stop offset=".4" stop-color="#50d000"/><stop offset=".78" stop-color="#50d000"/><stop offset="1" stop-color="#50d000"/></linearGradient><linearGradient id="g140" gradientUnits="userSpaceOnUse" x1="266.1" y1="66.8" x2="226.6" y2="197.5"><stop offset="0" stop-color="#5dd100"/><stop offset=".4" stop-color="#5dd100"/><stop offset=".78" stop-color="#5dd100"/><stop offset="1" stop-color="#5dd100"/></linearGradient><linearGradient id="g141" gradientUnits="userSpaceOnUse" x1="267.2" y1="66.8" x2="228.0" y2="197.6"><stop offset="0" stop-color="#6bd300"/><stop offset=".4" stop-color="#6bd300"/><stop offset=".78" stop-color="#6bd300"/><stop offset="1" stop-color="#6bd300"/></linearGradient><linearGradient id="g142" gradientUnits="userSpaceOnUse" x1="268.3" y1="66.8" x2="229.3" y2="197.7"><stop offset="0" stop-color="#78d400"/><stop offset=".4" stop-color="#78d400"/><stop offset=".78" stop-color="#78d400"/><stop offset="1" stop-color="#78d400"/></linearGradient><linearGradient id="g143" gradientUnits="userSpaceOnUse" x1="269.4" y1="66.9" x2="230.7" y2="197.8"><stop offset="0" stop-color="#85d500"/><stop offset=".4" stop-color="#85d500"/><stop offset=".78" stop-color="#85d500"/><stop offset="1" stop-color="#85d500"/></linearGradient><linearGradient id="g144" gradientUnits="userSpaceOnUse" x1="270.5" y1="66.9" x2="232.0" y2="197.9"><stop offset="0" stop-color="#93d700"/><stop offset=".4" stop-color="#93d700"/><stop offset=".78" stop-color="#93d700"/><stop offset="1" stop-color="#93d700"/></linearGradient><linearGradient id="g145" gradientUnits="userSpaceOnUse" x1="271.6" y1="66.9" x2="233.4" y2="198.0"><stop offset="0" stop-color="#a0d800"/><stop offset=".4" stop-color="#a0d800"/><stop offset=".78" stop-color="#a0d800"/><stop offset="1" stop-color="#a0d800"/></linearGradient><linearGradient id="g146" gradientUnits="userSpaceOnUse" x1="272.7" y1="66.9" x2="234.8" y2="198.1"><stop offset="0" stop-color="#a9d800"/><stop offset=".4" stop-color="#a9d800"/><stop offset=".78" stop-color="#a9d800"/><stop offset="1" stop-color="#a9d800"/></linearGradient><linearGradient id="g147" gradientUnits="userSpaceOnUse" x1="273.8" y1="66.9" x2="236.1" y2="198.2"><stop offset="0" stop-color="#b2d800"/><stop offset=".4" stop-color="#b2d800"/><stop offset=".78" stop-color="#b2d800"/><stop offset="1" stop-color="#b2d800"/></linearGradient><linearGradient id="g148" gradientUnits="userSpaceOnUse" x1="274.9" y1="67.0" x2="237.5" y2="198.3"><stop offset="0" stop-color="#bbd800"/><stop offset=".4" stop-color="#bbd800"/><stop offset=".78" stop-color="#bbd800"/><stop offset="1" stop-color="#bbd800"/></linearGradient><linearGradient id="g149" gradientUnits="userSpaceOnUse" x1="276.0" y1="67.0" x2="238.8" y2="198.4"><stop offset="0" stop-color="#c4d800"/><stop offset=".4" stop-color="#c4d800"/><stop offset=".78" stop-color="#c4d800"/><stop offset="1" stop-color="#c4d800"/></linearGradient></defs><path d="M112.00 42.50 L113.75 42.99 L38.17 158.20 L36.00 157.50 Z" fill="url(#g0)"/><path d="M113.10 42.80 L114.85 43.29 L39.53 158.64 L37.36 157.94 Z" fill="url(#g1)"/><path d="M114.19 43.11 L115.95 43.60 L40.88 159.08 L38.71 158.38 Z" fill="url(#g2)"/><path d="M115.29 43.41 L117.04 43.90 L42.24 159.52 L40.07 158.82 Z" fill="url(#g3)"/><path d="M116.39 43.72 L118.14 44.21 L43.60 159.96 L41.43 159.26 Z" fill="url(#g4)"/><path d="M117.48 44.03 L119.24 44.51 L44.95 160.40 L42.78 159.70 Z" fill="url(#g5)"/><path d="M118.58 44.33 L120.33 44.82 L46.31 160.84 L44.14 160.14 Z" fill="url(#g6)"/><path d="M119.68 44.63 L121.43 45.12 L47.67 161.28 L45.50 160.58 Z" fill="url(#g7)"/><path d="M120.77 44.94 L122.53 45.43 L49.02 161.72 L46.85 161.02 Z" fill="url(#g8)"/><path d="M121.87 45.24 L123.62 45.73 L50.38 162.16 L48.21 161.46 Z" fill="url(#g9)"/><path d="M122.97 45.55 L124.72 46.04 L51.74 162.60 L49.57 161.90 Z" fill="url(#g10)"/><path d="M124.06 45.85 L125.82 46.34 L53.09 163.04 L50.92 162.34 Z" fill="url(#g11)"/><path d="M125.16 46.16 L126.91 46.65 L54.45 163.48 L52.28 162.78 Z" fill="url(#g12)"/><path d="M126.26 46.47 L128.01 46.95 L55.81 163.92 L53.64 163.22 Z" fill="url(#g13)"/><path d="M127.35 46.77 L129.11 47.26 L57.16 164.36 L54.99 163.66 Z" fill="url(#g14)"/><path d="M128.45 47.08 L130.20 47.56 L58.52 164.80 L56.35 164.10 Z" fill="url(#g15)"/><path d="M129.55 47.38 L131.30 47.87 L59.88 165.24 L57.71 164.54 Z" fill="url(#g16)"/><path d="M130.64 47.68 L132.40 48.10 L61.23 165.60 L59.06 164.98 Z" fill="url(#g17)"/><path d="M131.74 47.99 L133.49 48.29 L62.59 165.90 L60.42 165.42 Z" fill="url(#g18)"/><path d="M132.84 48.18 L134.59 48.48 L63.95 166.21 L61.78 165.72 Z" fill="url(#g19)"/><path d="M133.93 48.37 L135.69 48.67 L65.30 166.51 L63.13 166.03 Z" fill="url(#g20)"/><path d="M135.03 48.56 L136.78 48.86 L66.66 166.81 L64.49 166.33 Z" fill="url(#g21)"/><path d="M136.13 48.74 L137.88 49.05 L68.02 167.12 L65.85 166.63 Z" fill="url(#g22)"/><path d="M137.22 48.93 L138.98 49.23 L69.37 167.42 L67.20 166.93 Z" fill="url(#g23)"/><path d="M138.32 49.12 L140.07 49.42 L70.73 167.72 L68.56 167.24 Z" fill="url(#g24)"/><path d="M139.42 49.31 L141.17 49.61 L72.09 168.03 L69.92 167.54 Z" fill="url(#g25)"/><path d="M140.51 49.50 L142.27 49.80 L73.44 168.33 L71.27 167.84 Z" fill="url(#g26)"/><path d="M141.61 49.69 L143.36 49.99 L74.80 168.63 L72.63 168.15 Z" fill="url(#g27)"/><path d="M142.71 49.88 L144.46 50.18 L76.16 168.93 L73.99 168.45 Z" fill="url(#g28)"/><path d="M143.80 50.06 L145.56 50.37 L77.51 169.24 L75.34 168.75 Z" fill="url(#g29)"/><path d="M144.90 50.25 L146.65 50.55 L78.87 169.54 L76.70 169.06 Z" fill="url(#g30)"/><path d="M146.00 50.44 L147.75 50.74 L80.23 169.84 L78.06 169.36 Z" fill="url(#g31)"/><path d="M147.09 50.63 L148.85 50.93 L81.58 170.15 L79.41 169.66 Z" fill="url(#g32)"/><path d="M148.19 50.82 L149.94 51.12 L82.94 170.45 L80.77 169.96 Z" fill="url(#g33)"/><path d="M149.29 51.01 L151.04 51.31 L84.30 170.75 L82.13 170.27 Z" fill="url(#g34)"/><path d="M150.38 51.19 L152.14 51.50 L85.65 171.06 L83.48 170.57 Z" fill="url(#g35)"/><path d="M151.48 51.38 L153.23 51.68 L87.01 171.36 L84.84 170.87 Z" fill="url(#g36)"/><path d="M152.58 51.57 L154.33 51.87 L88.37 171.66 L86.20 171.18 Z" fill="url(#g37)"/><path d="M153.67 51.76 L155.43 52.06 L89.72 171.96 L87.55 171.48 Z" fill="url(#g38)"/><path d="M154.77 51.95 L156.52 52.25 L91.08 172.27 L88.91 171.78 Z" fill="url(#g39)"/><path d="M155.87 52.14 L157.62 52.44 L92.44 172.57 L90.27 172.09 Z" fill="url(#g40)"/><path d="M156.96 52.33 L158.72 52.63 L93.79 172.87 L91.62 172.39 Z" fill="url(#g41)"/><path d="M158.06 52.51 L159.81 52.82 L95.15 173.18 L92.98 172.69 Z" fill="url(#g42)"/><path d="M159.16 52.70 L160.91 53.00 L96.51 173.48 L94.34 172.99 Z" fill="url(#g43)"/><path d="M160.25 52.89 L162.01 53.20 L97.86 173.79 L95.69 173.30 Z" fill="url(#g44)"/><path d="M161.35 53.08 L163.10 53.39 L99.22 174.09 L97.05 173.60 Z" fill="url(#g45)"/><path d="M162.45 53.27 L164.20 53.58 L100.58 174.40 L98.41 173.91 Z" fill="url(#g46)"/><path d="M163.54 53.47 L165.30 53.78 L101.93 174.71 L99.76 174.22 Z" fill="url(#g47)"/><path d="M164.64 53.66 L166.39 53.97 L103.29 175.02 L101.12 174.53 Z" fill="url(#g48)"/><path d="M165.74 53.85 L167.49 54.16 L104.65 175.33 L102.48 174.84 Z" fill="url(#g49)"/><path d="M166.83 54.05 L168.59 54.36 L106.00 175.64 L103.83 175.14 Z" fill="url(#g50)"/><path d="M167.93 54.24 L169.68 54.55 L107.36 175.95 L105.19 175.45 Z" fill="url(#g51)"/><path d="M169.03 54.43 L170.78 54.74 L108.72 176.26 L106.55 175.76 Z" fill="url(#g52)"/><path d="M170.12 54.63 L171.88 54.94 L110.07 176.57 L107.90 176.07 Z" fill="url(#g53)"/><path d="M171.22 54.82 L172.97 55.13 L111.43 176.87 L109.26 176.38 Z" fill="url(#g54)"/><path d="M172.32 55.02 L174.07 55.33 L112.79 177.18 L110.62 176.69 Z" fill="url(#g55)"/><path d="M173.41 55.21 L175.17 55.52 L114.14 177.49 L111.97 177.00 Z" fill="url(#g56)"/><path d="M174.51 55.40 L176.26 55.71 L115.50 177.80 L113.33 177.31 Z" fill="url(#g57)"/><path d="M175.61 55.60 L177.36 55.91 L116.86 178.11 L114.69 177.62 Z" fill="url(#g58)"/><path d="M176.70 55.79 L178.46 56.10 L118.21 178.42 L116.04 177.92 Z" fill="url(#g59)"/><path d="M177.80 55.98 L179.55 56.29 L119.57 178.73 L117.40 178.23 Z" fill="url(#g60)"/><path d="M178.90 56.18 L180.65 56.49 L120.93 179.04 L118.76 178.54 Z" fill="url(#g61)"/><path d="M179.99 56.37 L181.75 56.68 L122.28 179.35 L120.11 178.85 Z" fill="url(#g62)"/><path d="M181.09 56.56 L182.84 56.87 L123.64 179.65 L121.47 179.16 Z" fill="url(#g63)"/><path d="M182.19 56.76 L183.94 57.07 L125.00 179.96 L122.83 179.47 Z" fill="url(#g64)"/><path d="M183.28 56.95 L185.04 57.26 L126.35 180.27 L124.18 179.78 Z" fill="url(#g65)"/><path d="M184.38 57.14 L186.13 57.46 L127.71 180.58 L125.54 180.09 Z" fill="url(#g66)"/><path d="M185.48 57.34 L187.23 57.67 L129.07 180.92 L126.90 180.40 Z" fill="url(#g67)"/><path d="M186.57 57.54 L188.33 57.89 L130.42 181.25 L128.25 180.72 Z" fill="url(#g68)"/><path d="M187.67 57.76 L189.42 58.11 L131.78 181.59 L129.61 181.05 Z" fill="url(#g69)"/><path d="M188.77 57.98 L190.52 58.32 L133.14 181.93 L130.97 181.39 Z" fill="url(#g70)"/><path d="M189.86 58.19 L191.62 58.54 L134.49 182.26 L132.32 181.72 Z" fill="url(#g71)"/><path d="M190.96 58.41 L192.71 58.75 L135.85 182.60 L133.68 182.06 Z" fill="url(#g72)"/><path d="M192.06 58.62 L193.81 58.97 L137.21 182.93 L135.04 182.40 Z" fill="url(#g73)"/><path d="M193.15 58.84 L194.91 59.19 L138.56 183.27 L136.39 182.73 Z" fill="url(#g74)"/><path d="M194.25 59.06 L196.00 59.40 L139.92 183.60 L137.75 183.07 Z" fill="url(#g75)"/><path d="M195.35 59.27 L197.10 59.62 L141.28 183.94 L139.11 183.40 Z" fill="url(#g76)"/><path d="M196.44 59.49 L198.20 59.84 L142.63 184.27 L140.46 183.74 Z" fill="url(#g77)"/><path d="M197.54 59.71 L199.29 60.05 L143.99 184.61 L141.82 184.07 Z" fill="url(#g78)"/><path d="M198.64 59.92 L200.39 60.27 L145.35 184.95 L143.18 184.41 Z" fill="url(#g79)"/><path d="M199.73 60.14 L201.49 60.48 L146.70 185.28 L144.53 184.74 Z" fill="url(#g80)"/><path d="M200.83 60.35 L202.58 60.70 L148.06 185.62 L145.89 185.08 Z" fill="url(#g81)"/><path d="M201.93 60.57 L203.68 60.92 L149.42 185.95 L147.25 185.42 Z" fill="url(#g82)"/><path d="M203.02 60.79 L204.78 61.13 L150.77 186.29 L148.60 185.75 Z" fill="url(#g83)"/><path d="M204.12 61.00 L205.87 61.35 L152.13 186.62 L149.96 186.09 Z" fill="url(#g84)"/><path d="M205.22 61.22 L206.97 61.56 L153.49 186.96 L151.32 186.42 Z" fill="url(#g85)"/><path d="M206.31 61.44 L208.07 61.78 L154.84 187.29 L152.67 186.76 Z" fill="url(#g86)"/><path d="M207.41 61.65 L209.16 62.00 L156.20 187.63 L154.03 187.09 Z" fill="url(#g87)"/><path d="M208.51 61.87 L210.26 62.21 L157.56 187.97 L155.39 187.43 Z" fill="url(#g88)"/><path d="M209.60 62.08 L211.36 62.41 L158.91 188.28 L156.74 187.76 Z" fill="url(#g89)"/><path d="M210.70 62.30 L212.45 62.60 L160.27 188.58 L158.10 188.10 Z" fill="url(#g90)"/><path d="M211.80 62.49 L213.55 62.79 L161.63 188.88 L159.46 188.40 Z" fill="url(#g91)"/><path d="M212.89 62.67 L214.65 62.97 L162.98 189.18 L160.81 188.70 Z" fill="url(#g92)"/><path d="M213.99 62.86 L215.74 63.16 L164.34 189.49 L162.17 189.00 Z" fill="url(#g93)"/><path d="M215.09 63.05 L216.84 63.35 L165.70 189.79 L163.53 189.30 Z" fill="url(#g94)"/><path d="M216.18 63.23 L217.94 63.53 L167.05 190.09 L164.88 189.61 Z" fill="url(#g95)"/><path d="M217.28 63.42 L219.03 63.72 L168.41 190.39 L166.24 189.91 Z" fill="url(#g96)"/><path d="M218.38 63.61 L220.13 63.91 L169.77 190.69 L167.60 190.21 Z" fill="url(#g97)"/><path d="M219.47 63.80 L221.23 64.09 L171.12 190.99 L168.95 190.51 Z" fill="url(#g98)"/><path d="M220.57 63.98 L222.32 64.28 L172.48 191.29 L170.31 190.81 Z" fill="url(#g99)"/><path d="M221.67 64.17 L223.42 64.47 L173.84 191.59 L171.67 191.11 Z" fill="url(#g100)"/><path d="M222.76 64.36 L224.52 64.66 L175.19 191.89 L173.02 191.41 Z" fill="url(#g101)"/><path d="M223.86 64.54 L225.61 64.84 L176.55 192.20 L174.38 191.71 Z" fill="url(#g102)"/><path d="M224.96 64.73 L226.71 65.03 L177.91 192.50 L175.74 192.01 Z" fill="url(#g103)"/><path d="M226.05 64.92 L227.81 65.22 L179.26 192.80 L177.09 192.32 Z" fill="url(#g104)"/><path d="M227.15 65.10 L228.90 65.40 L180.62 193.10 L178.45 192.62 Z" fill="url(#g105)"/><path d="M228.25 65.29 L230.00 65.59 L181.98 193.40 L179.81 192.92 Z" fill="url(#g106)"/><path d="M229.34 65.48 L231.10 65.69 L183.33 193.60 L181.16 193.22 Z" fill="url(#g107)"/><path d="M230.44 65.67 L232.19 65.73 L184.69 193.73 L182.52 193.52 Z" fill="url(#g108)"/><path d="M231.54 65.71 L233.29 65.78 L186.05 193.86 L183.88 193.65 Z" fill="url(#g109)"/><path d="M232.63 65.75 L234.39 65.82 L187.40 194.00 L185.23 193.79 Z" fill="url(#g110)"/><path d="M233.73 65.80 L235.48 65.87 L188.76 194.13 L186.59 193.92 Z" fill="url(#g111)"/><path d="M234.83 65.84 L236.58 65.91 L190.12 194.26 L187.95 194.05 Z" fill="url(#g112)"/><path d="M235.92 65.88 L237.68 65.95 L191.47 194.40 L189.30 194.18 Z" fill="url(#g113)"/><path d="M237.02 65.93 L238.77 66.00 L192.83 194.53 L190.66 194.32 Z" fill="url(#g114)"/><path d="M238.12 65.97 L239.87 66.04 L194.19 194.66 L192.02 194.45 Z" fill="url(#g115)"/><path d="M239.21 66.01 L240.97 66.08 L195.54 194.79 L193.37 194.58 Z" fill="url(#g116)"/><path d="M240.31 66.06 L242.06 66.13 L196.90 194.93 L194.73 194.71 Z" fill="url(#g117)"/><path d="M241.41 66.10 L243.16 66.17 L198.26 195.06 L196.09 194.85 Z" fill="url(#g118)"/><path d="M242.50 66.15 L244.26 66.22 L199.61 195.19 L197.44 194.98 Z" fill="url(#g119)"/><path d="M243.60 66.19 L245.35 66.26 L200.97 195.32 L198.80 195.11 Z" fill="url(#g120)"/><path d="M244.70 66.23 L246.45 66.29 L202.33 195.44 L200.16 195.24 Z" fill="url(#g121)"/><path d="M245.79 66.27 L247.55 66.32 L203.68 195.56 L201.51 195.37 Z" fill="url(#g122)"/><path d="M246.89 66.30 L248.64 66.35 L205.04 195.68 L202.87 195.49 Z" fill="url(#g123)"/><path d="M247.99 66.33 L249.74 66.38 L206.40 195.79 L204.23 195.60 Z" fill="url(#g124)"/><path d="M249.08 66.36 L250.84 66.41 L207.75 195.91 L205.58 195.72 Z" fill="url(#g125)"/><path d="M250.18 66.39 L251.93 66.44 L209.11 196.03 L206.94 195.84 Z" fill="url(#g126)"/><path d="M251.28 66.43 L253.03 66.48 L210.47 196.15 L208.30 195.96 Z" fill="url(#g127)"/><path d="M252.37 66.46 L254.13 66.51 L211.82 196.26 L209.65 196.08 Z" fill="url(#g128)"/><path d="M253.47 66.49 L255.22 66.54 L213.18 196.38 L211.01 196.19 Z" fill="url(#g129)"/><path d="M254.57 66.52 L256.32 66.57 L214.54 196.50 L212.37 196.31 Z" fill="url(#g130)"/><path d="M255.66 66.55 L257.42 66.60 L215.89 196.62 L213.72 196.43 Z" fill="url(#g131)"/><path d="M256.76 66.58 L258.51 66.63 L217.25 196.74 L215.08 196.55 Z" fill="url(#g132)"/><path d="M257.86 66.61 L259.61 66.66 L218.61 196.85 L216.44 196.66 Z" fill="url(#g133)"/><path d="M258.95 66.64 L260.71 66.69 L219.96 196.96 L217.79 196.78 Z" fill="url(#g134)"/><path d="M260.05 66.67 L261.80 66.71 L221.32 197.07 L219.15 196.90 Z" fill="url(#g135)"/><path d="M261.15 66.70 L262.90 66.73 L222.68 197.18 L220.51 197.01 Z" fill="url(#g136)"/><path d="M262.24 66.72 L264.00 66.75 L224.03 197.28 L221.86 197.11 Z" fill="url(#g137)"/><path d="M263.34 66.74 L265.09 66.77 L225.39 197.39 L223.22 197.22 Z" fill="url(#g138)"/><path d="M264.44 66.76 L266.19 66.80 L226.75 197.50 L224.58 197.33 Z" fill="url(#g139)"/><path d="M265.53 66.78 L267.29 66.82 L228.10 197.60 L225.93 197.43 Z" fill="url(#g140)"/><path d="M266.63 66.81 L268.38 66.84 L229.46 197.71 L227.29 197.54 Z" fill="url(#g141)"/><path d="M267.73 66.83 L269.48 66.86 L230.82 197.82 L228.65 197.65 Z" fill="url(#g142)"/><path d="M268.82 66.85 L270.58 66.88 L232.17 197.92 L230.00 197.75 Z" fill="url(#g143)"/><path d="M269.92 66.87 L271.67 66.90 L233.53 198.03 L231.36 197.86 Z" fill="url(#g144)"/><path d="M271.02 66.89 L272.77 66.93 L234.89 198.14 L232.72 197.97 Z" fill="url(#g145)"/><path d="M272.11 66.91 L273.87 66.95 L236.24 198.24 L234.07 198.07 Z" fill="url(#g146)"/><path d="M273.21 66.93 L274.96 66.97 L237.60 198.35 L235.43 198.18 Z" fill="url(#g147)"/><path d="M274.31 66.96 L276.06 66.99 L238.96 198.46 L236.79 198.29 Z" fill="url(#g148)"/><path d="M275.40 66.98 L276.50 67.00 L239.50 198.50 L238.14 198.39 Z" fill="url(#g149)"/>
<g stroke="#b8b8b8" stroke-width="0.7" fill="none">
<line x1="112" y1="40.5" x2="278" y2="61.5"/>
<line x1="278" y1="61.5" x2="239.5" y2="207.5"/>
<line x1="38.5" y1="167" x2="239.5" y2="207.5"/>
<line x1="112" y1="41" x2="35.3" y2="157"/>
<line x1="35.3" y1="157" x2="38.5" y2="167"/>
</g>
<polygon points="239.5,207.5 259,212 250,209.5" fill="#fff"/>
<polygon points="248,206.5 261,212.2 248,213" fill="#fff"/>
<line x1="32" y1="146" x2="35.5" y2="157" stroke="#ccc" stroke-width="0.7"/>
<polygon points="30,139 33.5,146 30,147" fill="#fff"/>
</svg>
<div class="t" style="left:285px;top:75px;font-size:6px;color:#ddd">64.352μm</div>
<div class="t" style="left:236px;top:216.5px;font-size:6px;color:#ddd">64.286μm</div>
<div class="t" style="left:34.5px;top:173.5px;font-size:6px;color:#ccc">0</div>
<!-- colorbar 1 -->
<div class="a" style="left:338.5px;top:38.6px;width:5.5px;height:78px;background:linear-gradient(to bottom,#ff2800 0%,#ff8800 11%,#f8e800 25%,#80f000 37%,#00e000 48%,#00e090 60%,#00d0f8 72%,#0060ff 85%,#3010ff 93%,#6000c0 100%)"></div>
<div class="t" style="left:339.2px;top:27.8px;font-size:3.6px;color:#ddd">μm</div>
<div class="t" style="left:338.8px;top:33.2px;font-size:4.3px;color:#fff">1.14</div>
<div class="a" style="left:344px;top:83.5px;width:2.5px;height:0.6px;background:#bbb"></div>
<div class="t" style="left:348px;top:77.5px;font-size:4.6px;color:#eee">0</div>
<div class="t" style="left:339.5px;top:119.5px;font-size:4.6px;color:#eee">-0.956</div>

<!-- separator vertical -->
<div class="a" style="left:362.6px;top:8.3px;width:2.2px;height:226px;background:#3c3c3c"></div>

<!-- middle toolbar -->
<div class="tb" style="left:367.3px;width:26.7px"><div class="a" style="left:0.8px;top:1.2px;width:8px;height:7.5px;border:0.8px solid #d8d8d8;background:linear-gradient(to right,#000,#7a7a7a)"></div><div class="tbt" style="left:8.5px">Intensity</div></div>
<div class="tb" style="left:395px;width:28px"><div class="a" style="left:1.3px;top:1.2px;width:8px;height:7.5px;border:0.8px solid #d0d0e0;border-radius:1.5px;background:linear-gradient(to right,#c03040 0,#c03040 33%,#30a040 33%,#30a040 66%,#3050c0 66%)"></div><div class="tbt" style="left:10.5px">Color</div></div>
<div class="tb sel" style="left:424px;width:27.4px"><svg class="a" style="left:1px;top:0.8px" width="10" height="8.5" viewBox="0 0 10 8.5"><path d="M0.5 6 L2.5 3.5 L4 5 L5.5 0.8 L7 4 L8.5 2.5 L9.5 6 Z" fill="#a8d830"/><path d="M3 6 L5.5 2 L7.5 6 Z" fill="#e8e840"/><rect x="0.5" y="6" width="9" height="2" fill="#a8dcf0"/></svg><div class="tbt" style="left:12px">Height</div></div>
<div class="t" style="left:457.7px;top:14.8px;font-size:4.7px;color:#ccc">Zoom</div>
<div class="a" style="left:472.3px;top:13px;width:25.8px;height:7px;background:#3c3c3c;border:0.8px solid #6a6a6a"><div class="tbt" style="left:1.6px;top:1.3px;font-size:4.4px;color:#ddd">44%(Fit)</div></div>
<div class="a" style="left:499.6px;top:13px;width:5px;height:7px;background:#8a8a8a;border:0.6px solid #aaa"><div class="a" style="left:1.1px;top:2.6px;width:0;height:0;border-left:1.2px solid transparent;border-right:1.2px solid transparent;border-top:1.6px solid #fff"></div></div>
<div class="a" style="left:508px;top:10.5px;width:11.7px;height:11.4px;background:#5a5a5a;border:0.8px solid #8a8a8a"><div class="a" style="left:2.2px;top:2.4px;width:5px;height:5px;border:0.9px solid #f0f0f0;border-radius:50%"></div><div class="a" style="left:6.3px;top:7.4px;width:3px;height:1px;background:#f0f0f0;transform:rotate(45deg)"></div></div>

<!-- colorbar 2 -->
<div class="a" style="left:367.8px;top:39.5px;width:5.2px;height:75px;background:linear-gradient(to bottom,#ff2800 0%,#ff8800 11%,#f8e800 25%,#80f000 37%,#00e000 48%,#00e090 60%,#00d0f8 72%,#0060ff 85%,#3010ff 93%,#6000c0 100%)"></div>
<div class="t" style="left:367.8px;top:28.3px;font-size:3.6px;color:#ddd">μm</div>
<div class="t" style="left:367.3px;top:33.7px;font-size:4.3px;color:#fff">1.14</div>
<div class="a" style="left:373px;top:82px;width:2.5px;height:0.6px;background:#bbb"></div>
<div class="t" style="left:377.4px;top:75.6px;font-size:4.6px;color:#eee">0</div>
<div class="t" style="left:367.5px;top:115.4px;font-size:4.6px;color:#eee">-0.956</div>

<!-- heatmap -->
<div class="a" style="left:386.8px;top:24px;width:164.5px;height:164px;background:linear-gradient(to right,#e0f000 0.00%,#e7e30d 0.83%,#eade14 1.67%,#ecdc18 2.50%,#eeda1c 3.33%,#efda1d 4.17%,#ece410 5.00%,#e9ee03 5.83%,#e0f000 6.67%,#d7f000 7.50%,#cdf000 8.33%,#c4f000 9.17%,#b4ef00 10.00%,#a1ec00 10.83%,#8eea00 11.67%,#7ae700 12.50%,#67e500 13.33%,#53e200 14.17%,#40e000 15.00%,#35e005 15.83%,#2be00b 16.67%,#20e010 17.50%,#15e015 18.33%,#0be01b 19.17%,#00e020 20.00%,#00e029 20.83%,#00e032 21.67%,#00e03b 22.50%,#00e045 23.33%,#00e050 24.17%,#00e05b 25.00%,#00e067 25.83%,#00e072 26.67%,#00e07e 27.50%,#00e089 28.33%,#00e095 29.17%,#00e0a0 30.00%,#00e0a8 30.83%,#00e0b0 31.67%,#00e0b7 32.50%,#00e0bf 33.33%,#00e0c7 34.17%,#00e0cf 35.00%,#00e0d6 35.83%,#00dde0 36.67%,#00daea 37.50%,#05cbf0 38.33%,#0db5f0 39.17%,#00d0f0 40.00%,#00cef0 40.83%,#00cdf0 41.67%,#00cbf0 42.50%,#00caf0 43.33%,#00c8f0 44.17%,#00c7f0 45.00%,#00c5f0 45.83%,#00c3f0 46.67%,#00c2f0 47.50%,#00c0f0 48.33%,#0994ec 49.17%,#1072e8 50.00%,#107fe9 50.83%,#10a8ee 51.67%,#10b9f0 52.50%,#10bbf0 53.33%,#10bcf0 54.17%,#10bef0 55.00%,#10c0f0 55.83%,#10c1f0 56.67%,#10c3f0 57.50%,#10c5f0 58.33%,#10c6f0 59.17%,#10c8f0 60.00%,#10aded 60.83%,#1093e9 61.67%,#1096ea 62.50%,#10aded 63.33%,#10c0f0 64.17%,#0dc3f0 65.00%,#0bc5f0 65.83%,#09c7f0 66.67%,#07c9f0 67.50%,#04ccf0 68.33%,#02cef0 69.17%,#00d0f0 70.00%,#0787e3 70.83%,#049fe7 71.67%,#00d0f0 72.50%,#00d3e4 73.33%,#00d6d8 74.17%,#00d9cc 75.00%,#00dcc1 75.83%,#00dfb5 76.67%,#00e0a7 77.50%,#00e097 78.33%,#00e088 79.17%,#00e078 80.00%,#00e068 80.83%,#00e059 81.67%,#00e049 82.50%,#03e03d 83.33%,#09e037 84.17%,#10e030 85.00%,#17e029 85.83%,#1de023 86.67%,#24e01c 87.50%,#2be015 88.33%,#31e00f 89.17%,#38e008 90.00%,#3fe001 90.83%,#4ee200 91.67%,#60e400 92.50%,#72e600 93.33%,#84e800 94.17%,#95eb00 95.00%,#a7ed00 95.83%,#b9ef00 96.67%,#c5f000 97.50%,#cef000 98.33%,#d7f000 99.17%,#e0f000 100.00%)"></div>
<div class="a" style="left:386.8px;top:24px;width:164.5px;height:164px;background:linear-gradient(to right,#e8e000 0.00%,#efa421 0.83%,#f09928 1.67%,#f09b28 2.50%,#f09d28 3.33%,#f09e28 4.17%,#f0a028 5.00%,#f0b31b 5.83%,#f0c50d 6.67%,#f0d800 7.50%,#dbe000 8.33%,#c5e800 9.17%,#b0f000 10.00%,#9ded00 10.83%,#8beb00 11.67%,#78e800 12.50%,#65e500 13.33%,#53e300 14.17%,#40e000 15.00%,#35e005 15.83%,#2be00b 16.67%,#20e010 17.50%,#15e015 18.33%,#0be01b 19.17%,#00e020 20.00%,#00e029 20.83%,#00e032 21.67%,#00e03b 22.50%,#00e045 23.33%,#00e050 24.17%,#00e05b 25.00%,#00e067 25.83%,#00e072 26.67%,#00e07e 27.50%,#00e089 28.33%,#00e095 29.17%,#00e0a0 30.00%,#00e0a8 30.83%,#00e0b0 31.67%,#00e0b7 32.50%,#00e0bf 33.33%,#00e0c7 34.17%,#00e0cf 35.00%,#00e0d6 35.83%,#00dde0 36.67%,#00daea 37.50%,#05cbf0 38.33%,#0db5f0 39.17%,#00d0f0 40.00%,#00cef0 40.83%,#00cdf0 41.67%,#00cbf0 42.50%,#00caf0 43.33%,#00c8f0 44.17%,#00c7f0 45.00%,#00c5f0 45.83%,#00c3f0 46.67%,#00c2f0 47.50%,#00c0f0 48.33%,#0994ec 49.17%,#1072e8 50.00%,#107fe9 50.83%,#10a8ee 51.67%,#10b9f0 52.50%,#10bbf0 53.33%,#10bcf0 54.17%,#10bef0 55.00%,#10c0f0 55.83%,#10c1f0 56.67%,#10c3f0 57.50%,#10c5f0 58.33%,#10c6f0 59.17%,#10c8f0 60.00%,#10aded 60.83%,#1093e9 61.67%,#1096ea 62.50%,#10aded 63.33%,#10c0f0 64.17%,#0dc3f0 65.00%,#0bc5f0 65.83%,#09c7f0 66.67%,#07c9f0 67.50%,#04ccf0 68.33%,#02cef0 69.17%,#00d0f0 70.00%,#0787e3 70.83%,#049fe7 71.67%,#00d0f0 72.50%,#00d3e4 73.33%,#00d6d8 74.17%,#00d9cc 75.00%,#00dcc1 75.83%,#00dfb5 76.67%,#00e0a7 77.50%,#00e097 78.33%,#00e088 79.17%,#00e078 80.00%,#00e068 80.83%,#00e059 81.67%,#00e049 82.50%,#03e03d 83.33%,#09e037 84.17%,#10e030 85.00%,#17e029 85.83%,#1de023 86.67%,#24e01c 87.50%,#2be015 88.33%,#31e00f 89.17%,#38e008 90.00%,#3fe001 90.83%,#4ee200 91.67%,#60e400 92.50%,#72e600 93.33%,#84e800 94.17%,#95eb00 95.00%,#a7ed00 95.83%,#b9ef00 96.67%,#c5f000 97.50%,#cef000 98.33%,#d7f000 99.17%,#e0f000 100.00%);-webkit-mask-image:linear-gradient(to bottom,transparent 10%,#000 32%,#000 68%,transparent 90%)"></div>
<div class="a" style="left:386.8px;top:24px;width:164.5px;height:164px;background:linear-gradient(to right,#e8f000 0.00%,#e3f000 0.83%,#ddf000 1.67%,#d8f000 2.50%,#d3f000 3.33%,#cdf000 4.17%,#c8f000 5.00%,#afec00 5.83%,#96e800 6.67%,#7ee500 7.50%,#65e100 8.33%,#46e000 9.17%,#26e000 10.00%,#06e000 10.83%,#00e005 11.67%,#00e00a 12.50%,#00e010 13.33%,#00e016 14.17%,#00e01b 15.00%,#00e021 15.83%,#00e027 16.67%,#00e02d 17.50%,#00e039 18.33%,#00e051 19.17%,#00e068 20.00%,#00e07f 20.83%,#00e097 21.67%,#00dfaa 22.50%,#00ddbb 23.33%,#00dccb 24.17%,#00dadc 25.00%,#00d8ed 25.83%,#00d8f0 26.67%,#00d7f0 27.50%,#00d6f0 28.33%,#00d6f0 29.17%,#00d5f0 30.00%,#00d4f0 30.83%,#00d4f0 31.67%,#00d3f0 32.50%,#00d3f0 33.33%,#00d2f0 34.17%,#00d1f0 35.00%,#00d1f0 35.83%,#00d0f0 36.67%,#01cdf0 37.50%,#04c7f0 38.33%,#06c2f0 39.17%,#08bcf0 40.00%,#0ab6f0 40.83%,#0cb1f0 41.67%,#0fabf0 42.50%,#10a5ef 43.33%,#109dee 44.17%,#1095ed 45.00%,#108deb 45.83%,#1085ea 46.67%,#107de9 47.50%,#1078e8 48.33%,#1077e8 49.17%,#1076e8 50.00%,#1075e8 50.83%,#1074e8 51.67%,#1074e8 52.50%,#1073e8 53.33%,#1072e8 54.17%,#1071e8 55.00%,#1070e8 55.83%,#1077e9 56.67%,#107feb 57.50%,#1087ed 58.33%,#1090ee 59.17%,#1098f0 60.00%,#1095f0 60.83%,#1091f0 61.67%,#1068e0 62.50%,#1050d8 63.33%,#1079ed 64.17%,#107fef 65.00%,#107eee 65.83%,#107ded 66.67%,#107cec 67.50%,#107aea 68.33%,#1079e9 69.17%,#1078e8 70.00%,#1057db 70.83%,#0885e3 71.67%,#00c0f0 72.50%,#00c4ed 73.33%,#00c8eb 74.17%,#00cce8 75.00%,#00d0e5 75.83%,#00d4e3 76.67%,#00d8e0 77.50%,#00dac3 78.33%,#00dda1 79.17%,#00e080 80.00%,#00e074 80.83%,#00e067 81.67%,#00e05b 82.50%,#00e04e 83.33%,#00e042 84.17%,#07e03b 85.00%,#0fe036 85.83%,#17e030 86.67%,#20e02b 87.50%,#28e025 88.33%,#30e020 89.17%,#38e01a 90.00%,#41e015 90.83%,#49e00f 91.67%,#51e00a 92.50%,#59e004 93.33%,#62e000 94.17%,#6de300 95.00%,#78e500 95.83%,#84e700 96.67%,#8fe900 97.50%,#9aec00 98.33%,#a5ee00 99.17%,#b0f000 100.00%);-webkit-mask-image:linear-gradient(to bottom,#000 0%,#000 15%,transparent 65%)"></div>
<div class="a" style="left:452.2px;top:74.8px;width:56px;height:56.7px;background:rgba(165,150,95,0.7)"></div>
<div class="t" style="left:366.3px;top:223.8px;font-size:5px;color:#ddd">(X,Y)&nbsp; -&nbsp; -</div>
<div class="t" style="left:425px;top:223.8px;font-size:5px;color:#ddd">Height&nbsp; -&nbsp; -</div>
<div class="t" style="left:498.6px;top:223.8px;font-size:5px;color:#ddd">Intensity&nbsp; -&nbsp; -</div>

<!-- right column bg -->
<div class="a" style="left:559px;top:8.3px;width:141px;height:225px;background:#2a2a2a"></div>
<div class="a" style="left:563px;top:12.3px;width:131.5px;height:120px;background:#393939;border:1px solid #505050;border-radius:3px;box-shadow:0 1px 0 #1a1a1a"></div>
<div class="hdr" style="left:565.5px;top:15.3px;width:123.5px"><div class="n">1</div><div class="s">Specify the evaluation area</div></div>
<div class="rbtn" style="left:577.8px;top:26.7px;width:21.9px;height:18.5px"><div class="lbl" style="left:6.3px;top:6.8px;font-size:4.8px">Add</div></div>
<div class="rbtn" style="left:603.6px;top:26.7px;width:21.4px;height:18.5px"><div class="lbl" style="left:6.3px;top:6.8px;font-size:4.8px">Edit</div></div>
<div class="rbtn" style="left:629.6px;top:26.7px;width:21.2px;height:18.5px"><svg class="a" style="left:6px;top:2.5px" width="9" height="9" viewBox="0 0 9 9"><path d="M1.5 1.8 H7.5 M3.3 1.8 V0.8 H5.7 V1.8 M2.2 2.8 L2.7 8.5 H6.3 L6.8 2.8 Z M3.7 3.8 V7.5 M5.3 3.8 V7.5" fill="none" stroke="#e8e8e8" stroke-width="0.8"/></svg><div class="lbl" style="left:4px;top:12.2px;font-size:4.2px">Delete</div></div>
<div class="rbtn" style="left:655px;top:26.7px;width:21.8px;height:18.5px"><svg class="a" style="left:5.5px;top:2.5px" width="11" height="9" viewBox="0 0 11 9"><path d="M1.5 1.8 H7.5 M3.3 1.8 V0.8 H5.7 V1.8 M2.2 2.8 L2.7 8.5 H6.3 L6.8 2.8 Z" fill="none" stroke="#e0e0e0" stroke-width="0.8"/><rect x="4" y="4.5" width="6" height="4" fill="#2a9cc0"/></svg><div class="lbl" style="left:2px;top:12.2px;font-size:4.2px">Delete all</div></div>
<div class="rbtn" style="left:591px;top:48.6px;width:73px;height:11.6px;background:linear-gradient(#6e6e6e,#4c4c4c)"><div class="lbl" style="left:27.5px;top:3.2px;font-size:5.6px">ROI-1</div><div class="t" style="right:1.8px;top:3.2px;font-size:3.5px;color:#eee">▼</div></div>
<div class="hdr" style="left:565.5px;top:64.7px;width:124px"><div class="n">2</div><div class="s">Remove the tilt</div></div>
<div class="cb" style="left:603.2px;top:78.6px"></div>
<div class="lbl" style="left:611.4px;top:79.3px;font-size:5.8px">Auto tilt removal</div>
<div class="a" style="left:569.8px;top:89.2px;width:116.2px;height:34.4px;background:#1e1e1e;border:0.6px solid #2c2c2c;border-radius:3px"></div>
<svg class="a" style="left:574.5px;top:101px" width="10" height="13" viewBox="0 0 10 13"><path d="M3 8.5 C1.2 7.2 0.8 5.5 0.8 4.5 C0.8 2.2 2.7 0.6 4.6 0.6 C6.5 0.6 8.4 2.2 8.4 4.5 C8.4 5.5 8 7.2 6.2 8.5 L6 9.8 L3.2 9.8 Z" fill="none" stroke="#f0f0f0" stroke-width="1"/><path d="M3.3 11 H5.9 M3.7 12.2 H5.5" stroke="#f0f0f0" stroke-width="0.8"/></svg>
<div class="lbl" style="left:593px;top:101.8px;font-size:5.8px">No area set case, entire image will</div>
<div class="lbl" style="left:593px;top:108px;font-size:5.8px">be considered for calculation</div>

<!-- horizontal separator -->
<div class="a" style="left:0;top:232.8px;width:700px;height:2.2px;background:#606060"></div>

<!-- height/hybrid tab -->
<div class="a" style="left:3px;top:238.3px;width:49.5px;height:11.1px;background:#3a6886;border:0.8px solid #5a88a6"><div class="lbl" style="left:2.4px;top:2.1px;font-size:6.8px;color:#f0f6fa">Height / Hybrid</div></div>

<!-- bottom panel -->
<div class="a" style="left:1.8px;top:250.5px;width:554.2px;height:146.5px;background:#404144;border:1px solid #4a4a4a"></div>
<div class="a" style="left:220px;top:256px;width:1px;height:108px;background:#474747"></div>
<div class="lbl" style="left:94.3px;top:255.4px;font-size:5.75px">Height image</div>
<!-- small colorbar -->
<div class="a" style="left:8.8px;top:279.4px;width:5px;height:26.6px;background:linear-gradient(to bottom,#ff2800 0%,#ff8800 11%,#f8e800 25%,#80f000 37%,#00e000 48%,#00e090 60%,#00d0f8 72%,#0060ff 85%,#3010ff 93%,#6000c0 100%)"></div>
<div class="t" style="left:9px;top:268.3px;font-size:3.6px;color:#ddd">μm</div>
<div class="t" style="left:8.5px;top:273px;font-size:4.4px;color:#fff">0.382</div>
<div class="a" style="left:14px;top:290px;width:2px;height:0.6px;background:#bbb"></div>
<div class="t" style="left:18px;top:285.5px;font-size:4.6px;color:#eee">0</div>
<div class="t" style="left:8.5px;top:307.5px;font-size:4.6px;color:#eee">-0.405</div>
<div class="a" style="left:43.2px;top:263.8px;width:174px;height:100.6px;background:#000"></div>
<div class="a" style="left:43.4px;top:264.2px;width:91.9px;height:93.6px;background:linear-gradient(to right,#b0f000 0.00%,#abf000 1.00%,#a5f000 2.00%,#a0f000 3.00%,#75eb00 4.00%,#80eb00 5.00%,#c0f000 6.00%,#75eb00 7.00%,#4fe800 8.00%,#4ce800 9.00%,#4ae800 10.00%,#47e800 11.00%,#45e800 12.00%,#42e800 13.00%,#40e800 14.00%,#68ec00 15.00%,#90f000 16.00%,#68ec00 17.00%,#40e800 18.00%,#3ee805 19.00%,#3be809 20.00%,#39e80e 21.00%,#37e812 22.00%,#35e817 23.00%,#32e81b 24.00%,#30e820 25.00%,#20e850 26.00%,#10e880 27.00%,#0ce888 28.00%,#08e890 29.00%,#04e898 30.00%,#00e8a0 31.00%,#00e8a0 32.00%,#00e8a0 33.00%,#00e8a0 34.00%,#00e8a0 35.00%,#00e8a0 36.00%,#00e8a0 37.00%,#00e8a0 38.00%,#00e8a0 39.00%,#00e8a0 40.00%,#04e898 41.00%,#08e890 42.00%,#0ce888 43.00%,#10e880 44.00%,#28e840 45.00%,#40e800 46.00%,#42e800 47.00%,#44e800 48.00%,#46e800 49.00%,#48e800 50.00%,#4ae800 51.00%,#4ce800 52.00%,#4ee800 53.00%,#50e800 54.00%,#60ea00 55.00%,#70ec00 56.00%,#80ee00 57.00%,#90f000 58.00%,#90f000 59.00%,#90f000 60.00%,#90f000 61.00%,#90f000 62.00%,#90f000 63.00%,#90f000 64.00%,#5be040 65.00%,#2bdd78 66.00%,#00e8a8 67.00%,#00e8a6 68.00%,#00e8a5 69.00%,#00e8a3 70.00%,#00e8a2 71.00%,#00e8a0 72.00%,#40e835 73.00%,#5ee800 74.00%,#59e800 75.00%,#54e800 76.00%,#4fe800 77.00%,#4ae800 78.00%,#45e800 79.00%,#40e800 80.00%,#3de808 81.00%,#3be810 82.00%,#38e818 83.00%,#35e820 84.00%,#33e828 85.00%,#30e830 86.00%,#20e858 87.00%,#10e880 88.00%,#20e858 89.00%,#30e830 90.00%,#36e826 91.00%,#3de81d 92.00%,#43e813 93.00%,#4ae80a 94.00%,#50e800 95.00%,#53ea00 96.00%,#56eb00 97.00%,#5aed00 98.00%,#5dee00 99.00%,#60f000 100.00%)"></div>
<div class="a" style="left:43.4px;top:264.2px;width:91.9px;height:93.6px;background:repeating-linear-gradient(to right,rgba(40,230,0,0) 0px,rgba(40,230,0,0) 1.3px,rgba(190,240,0,0.35) 1.8px,rgba(40,230,0,0) 2.6px,rgba(40,230,0,0) 3.7px)"></div>
<div class="a" style="left:103.6px;top:264.2px;width:1.6px;height:50px;background:linear-gradient(#104080,#1a5070 50%,rgba(0,200,140,0))"></div>

<!-- histogram -->
<div class="lbl" style="left:328px;top:255.5px;font-size:5.5px">Histogram</div>
<div class="t" style="left:250.6px;top:265px;font-size:5px;color:#eee">0.363 μm</div>
<div class="t" style="left:251px;top:348.2px;font-size:4.8px;color:#eee">-0.404 μm</div>
<div class="a" style="left:274px;top:261.5px;width:162px;height:94px;background:#555759"></div>
<svg class="a" style="left:275.5px;top:262.5px" width="158" height="91" viewBox="0 0 158 91">
<rect x="0" y="0" width="158" height="91" fill="#000"/>
<line x1="0.5" y1="0" x2="0.5" y2="91" stroke="#aaa" stroke-width="1"/>
<path d="M0.5,7 L0.9,8 C1.5,11 2,13 2.7,14.4 C3.5,16 4.5,17.5 5.5,18.1 C7.5,19.5 9,20.2 10.9,20.8 L21.9,24.5 C30,26 35,26.8 40.2,27.2 L74.5,29 L119.5,32 L140.5,34.1 L157,36.5 L157,37.2 L134.5,40.1 L92.5,44 L84,45.3 L92.5,46 L80.5,48.5 L74.5,48.8 L49.3,51.5 L31,54 L18.2,57.5 L9.1,60.8 L5,63.5 L2,69 L1,75 L0.5,82 Z" fill="#80f000"/>
</svg>

<!-- roughness param -->
<div class="lbl" style="left:481.8px;top:255.6px;font-size:5.55px">Roughness parameter</div>
<div class="a" style="left:464.3px;top:263.2px;width:90px;height:130.5px;background:#232323;border-radius:2px"></div>
<div class="rn" style="left:468px;top:267px">Sq</div><div class="rp" style="left:489.8px;top:265.8px">0.074</div><div class="ru" style="left:524.7px;top:268.2px">[μm]</div>
<div class="rn" style="left:468px;top:275.8px">Ssk</div><div class="rp" style="left:488.5px;top:274.7px">-0.426</div>
<div class="rn" style="left:468px;top:285px">Sku</div><div class="rp" style="left:489.8px;top:283.9px">3.802</div>
<div class="rn" style="left:468px;top:293.5px">Sp</div><div class="rp" style="left:489.8px;top:292.4px">0.261</div><div class="ru" style="left:524.7px;top:294.8px">[μm]</div>
<div class="rn" style="left:468px;top:302.4px">Sv</div><div class="rp" style="left:489.8px;top:301.3px">0.364</div><div class="ru" style="left:524.7px;top:303.7px">[μm]</div>
<div class="rn" style="left:468px;top:311.5px">Sz</div><div class="rp" style="left:489.8px;top:310.4px">0.624</div><div class="ru" style="left:524.7px;top:312.8px">[μm]</div>
<div class="rn" style="left:468px;top:320.6px">Sa</div><div class="rp" style="left:489.8px;top:319.5px">0.058</div><div class="ru" style="left:524.7px;top:321.9px">[μm]</div>
<div class="rn" style="left:468px;top:329.3px">Sdq</div><div class="rp" style="left:489.8px;top:328.2px">0.364</div>
<div class="rn" style="left:468px;top:338.2px">Sdr</div><div class="rp" style="left:489.8px;top:337.1px">5.743</div><div class="ru" style="left:527px;top:339.5px">[%]</div>

<!-- analysis condition -->
<div class="a" style="left:5.5px;top:366px;width:456.5px;height:27.5px;background:#252525;border-radius:2px"></div>
<div class="lbl" style="left:8.6px;top:375.5px;font-size:5.6px">Analysis</div>
<div class="lbl" style="left:8.6px;top:381.8px;font-size:5.6px">condition</div>
<div class="lbl" style="left:55.7px;top:369.3px;font-size:5.6px">F-operator</div><div class="lbl" style="left:99px;top:369.3px;font-size:5.6px">--</div>
<div class="lbl" style="left:55.7px;top:375.5px;font-size:5.6px">S filter</div><div class="lbl" style="left:78.9px;top:375.5px;font-size:5.6px">--</div>
<div class="lbl" style="left:55.7px;top:381.8px;font-size:5.6px">L filter</div><div class="lbl" style="left:78.9px;top:381.8px;font-size:5.6px">--</div>
<div class="lbl" style="left:55.7px;top:388.4px;font-size:5.6px">Filter type</div><div class="lbl" style="left:98.6px;top:388.4px;font-size:5.6px">Gaussian</div>

<!-- right bottom column -->
<div class="a" style="left:559.5px;top:235px;width:140.5px;height:203px;background:#252525"></div>
<div class="a" style="left:562.5px;top:237.8px;width:131.5px;height:114.3px;background:#393939;border:1px solid #505050;border-radius:3px;box-shadow:0 1px 0 #151515"></div>
<div class="hdr" style="left:566.8px;top:241.8px;width:122.2px"><div class="n">3</div><div class="s">Set the filter conditions</div><div class="a" style="right:1.5px;top:0.8px;width:6.5px;height:6.5px;background:#444;border-radius:2px"><div class="n" style="left:1.2px;top:0px">?</div></div></div>
<div class="cb" style="left:571.6px;top:256.2px"></div><div class="lbl" style="left:579.2px;top:257px;font-size:5.8px;color:#f4f4f4">F-operator</div>
<div class="cb" style="left:571.6px;top:272.8px"></div><div class="lbl" style="left:579.2px;top:273.2px;font-size:5.8px;color:#f4f4f4">S filter</div>
<div class="cb" style="left:571.6px;top:289.2px"></div><div class="lbl" style="left:579.2px;top:289.6px;font-size:5.8px;color:#f4f4f4">L filter</div>
<div class="lbl" style="left:585.2px;top:303.2px;font-size:5.8px;color:#d8d8d8">Filter type</div>
<div class="inp" style="left:625px;top:252.9px;width:54.2px;height:12.2px"><div class="a" style="left:2.4px;top:2.6px;width:7px;height:7px;background:#1a7088;border:0.8px solid #40b0c8;border-radius:50%"><div class="a" style="left:2.3px;top:1.3px;width:1.4px;height:3.5px;background:#e0f0f0"></div></div><div class="lbl" style="left:10.5px;top:3.2px;font-size:5.8px">Form removal</div></div>
<div class="inp" style="left:626.8px;top:270.9px;width:34px;height:8.4px"><div class="lbl" style="left:1.5px;top:1.5px;font-size:5px;color:#777">0.2</div></div><div class="lbl" style="left:661.7px;top:272.5px;font-size:5.5px">μm</div>
<div class="inp" style="left:626.8px;top:287px;width:34px;height:8.2px"><div class="lbl" style="left:1.5px;top:1.5px;font-size:5px;color:#777">1</div></div><div class="lbl" style="left:661.7px;top:288.5px;font-size:5.5px">μm</div>
<div class="rbtn" style="left:625.8px;top:300px;width:50.5px;height:11.7px"><div class="lbl" style="left:10px;top:3px;font-size:5.8px">Gaussian</div><div class="t" style="right:1.5px;top:3px;font-size:4px;color:#ddd">▼</div></div>
<div class="hdr" style="left:567.3px;top:317.4px;width:121.7px"><div class="n">4</div><div class="s">Select the roughness parameter</div></div>
<div class="lbl" style="left:574.6px;top:330px;font-size:5.8px">Parameter</div>
<div class="rbtn" style="left:620.3px;top:327.8px;width:64px;height:11px"><div class="lbl" style="left:13.5px;top:2.9px;font-size:5.8px">Height / Hybrid</div><div class="t" style="right:1.5px;top:3px;font-size:4px;color:#ddd">▼</div></div>
<div class="a" style="left:570.5px;top:342.2px;width:54.5px;height:8px;background:#2c2c2c;border:0.8px solid #505050;border-radius:1px"><div class="lbl" style="left:7px;top:1.3px;font-size:5px;color:#f0f0f0">Advanced settings</div></div>
<div class="a" style="left:627px;top:342.2px;width:58px;height:8px;background:#2c2c2c;border:0.8px solid #505050;border-radius:1px"><div class="lbl" style="left:13.5px;top:1.3px;font-size:5.1px;color:#f0f0f0">Register/Edit</div></div>
<div class="rbtn" style="left:593px;top:356.4px;width:64.4px;height:15.2px;background:linear-gradient(#6c6c6c,#4a4a4a)"><div class="a" style="left:1.6px;top:2.2px;width:11.6px;height:10px;background:#1e7a98;border:0.7px solid #6ab8d0;border-radius:1.5px"><svg class="a" style="left:2px;top:1px" width="7" height="8" viewBox="0 0 7 8"><path d="M1 7 V2 H3.5 V5 H6 M4.5 0.5 L6 2 L4.5 3.5" fill="none" stroke="#e8f4f8" stroke-width="0.9"/></svg></div><div class="lbl" style="left:23.5px;top:4.3px;font-size:6.4px">Calculation</div></div>

<!-- separator at 400 -->
<div class="a" style="left:557.5px;top:400.3px;width:142.5px;height:1.8px;background:#606060"></div>
<div class="rbtn" style="left:568.8px;top:409px;width:57.8px;height:16px;background:linear-gradient(#6a6a6a,#4c4c4c)"><div class="lbl" style="left:6.2px;top:4.5px;font-size:7.1px">Create report</div></div>
<div class="rbtn" style="left:631.8px;top:409px;width:57.6px;height:16px;background:linear-gradient(#6a6a6a,#4c4c4c)"><div class="lbl" style="left:17.5px;top:4.5px;font-size:7px">Cancel</div></div>

<!-- table -->
<div class="a" style="left:0;top:396.7px;width:557.5px;height:3px;background:#050505"></div>
<div class="a" style="left:0;top:399.6px;width:557.5px;height:33.1px;background:linear-gradient(#f6f6f6 0,#f6f6f6 50%,#ececec 60%,#fcfcfc 85%)"></div>
<div class="a" style="left:0;top:399.6px;width:557.5px;height:1px;background:#a8a8a8"></div>
<div class="a" style="left:0;top:400.6px;width:557.5px;height:8.4px;background:linear-gradient(#e4e4e4 0,#e4e4e4 20%,#d2d2d2 25%,#d2d2d2)"></div>
<div class="a" style="left:0;top:409px;width:557.5px;height:7.8px;background:#f0f0f0;border-bottom:1px solid #bbb"></div>
<div class="a" style="left:0;top:402.3px;height:6.7px;width:557.5px">
<div class="th" style="left:0;width:7.7px"></div>
<div class="th" style="left:7.7px;width:7.7px">No.</div>
<div class="th" style="left:15.4px;width:15.1px">Result</div>
<div class="th" style="left:30.5px;width:51px">Sq[μm]</div>
<div class="th" style="left:81.5px;width:51px">Ssk</div>
<div class="th" style="left:132.5px;width:51px">Sku</div>
<div class="th" style="left:183.5px;width:51px">Sp[μm]</div>
<div class="th" style="left:234.5px;width:51px">Sv[μm]</div>
<div class="th" style="left:285.5px;width:51px">Sz[μm]</div>
<div class="th" style="left:336.5px;width:51px">Sa[μm]</div>
<div class="th" style="left:387.5px;width:51.5px">Sdq</div>
<div class="th" style="left:439px;width:51.5px">Sdr[%]</div>
<div class="th" style="left:490.5px;width:51.5px">FOperator</div>
<div class="th" style="left:542px;width:15.5px">S-filter</div>
</div>
<div class="a" style="left:0;top:409px;height:7px;width:557.5px">
<div class="td" style="left:0;width:7.7px">✓</div>
<div class="td" style="left:7.7px;width:7.7px">1</div>
<div class="td" style="left:15.4px;width:15.1px;background:#e4e4e4"></div>
<div class="td" style="left:30.5px;width:51px">0.074</div>
<div class="td" style="left:81.5px;width:51px">-0.426</div>
<div class="td" style="left:132.5px;width:51px">3.802</div>
<div class="td" style="left:183.5px;width:51px">0.261</div>
<div class="td" style="left:234.5px;width:51px">0.364</div>
<div class="td" style="left:285.5px;width:51px">0.624</div>
<div class="td" style="left:336.5px;width:51px">0.058</div>
<div class="td" style="left:387.5px;width:51.5px">0.364</div>
<div class="td" style="left:439px;width:51.5px">5.743</div>
<div class="td" style="left:490.5px;width:51.5px">--</div>
<div class="td" style="left:542px;width:15.5px">-</div>
</div>
<div class="a" style="left:0;top:432.7px;width:557.5px;height:5.3px;background:#1a1a1a"></div>
<div class="a" style="left:7px;top:433.5px;width:469px;height:4.5px;background:#404040"></div>
<div class="t" style="left:2px;top:433.5px;font-size:4px;color:#fff">◀</div>
<div class="a" style="left:556px;top:435.5px;width:1.5px;height:1.5px;background:#fff"></div>
</body></html>
